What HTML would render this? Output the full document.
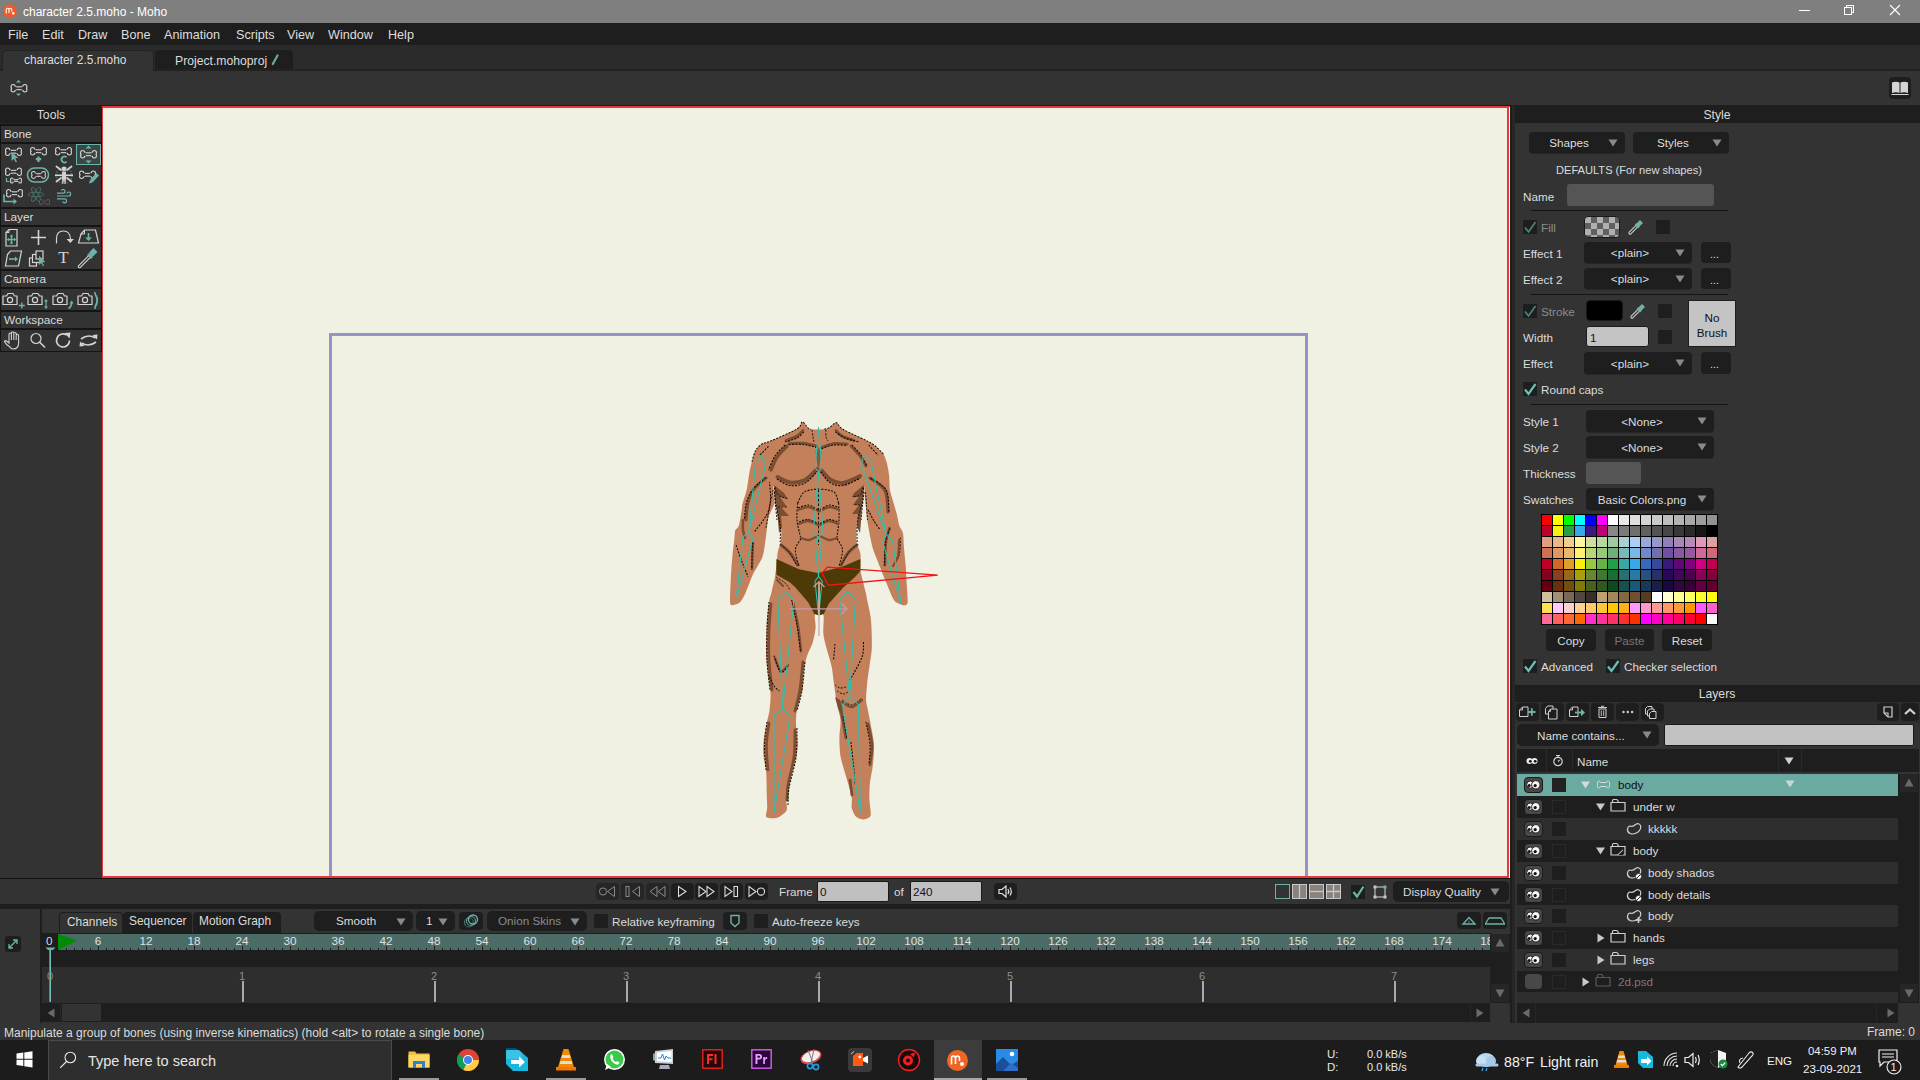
<!DOCTYPE html>
<html><head><meta charset="utf-8">
<style>
*{margin:0;padding:0;box-sizing:border-box}
html,body{width:1920px;height:1080px;overflow:hidden;background:#333;font-family:"Liberation Sans",sans-serif;font-size:12px;color:#ddd;position:relative}
.a{position:absolute}
.t{position:absolute;white-space:nowrap}
svg.a{overflow:visible}
</style></head><body>
<div class="a" style="left:0px;top:0px;width:1920px;height:23px;background:#7f7f7f;"></div>
<svg class="a" style="left:3px;top:4px;" width="14" height="14" viewBox="0 0 14 14"><circle cx="7" cy="7" r="6.8" fill="#f05a28"/><path d="M3.2 9.5V6Q3.2 4.3 4.6 4.3Q6 4.3 6 6V9M6 6Q6 4.3 7.4 4.3Q8.8 4.3 8.8 6V7.5" fill="none" stroke="#fff" stroke-width="1.1"/><circle cx="10.3" cy="9.2" r="1.2" fill="#fff"/></svg>
<div class="t" style="left:23px;top:3.1px;height:18px;line-height:18px;font-size:12px;color:#ffffff;">character 2.5.moho - Moho</div>
<div class="a" style="left:1799px;top:10px;width:11px;height:1px;background:#ffffff;"></div>
<div class="a" style="left:1846px;top:5px;width:8px;height:8px;border:1px solid #fff;"></div>
<div class="a" style="left:1844px;top:7px;width:8px;height:8px;background:#7f7f7f;border:1px solid #fff;"></div>
<svg class="a" style="left:1889px;top:4px;" width="12" height="12" viewBox="0 0 12 12"><path d="M1 1L11 11M11 1L1 11" stroke="#fff" stroke-width="1.1"/></svg>
<div class="a" style="left:0px;top:23px;width:1920px;height:22px;background:#1e1e1e;"></div>
<div class="t" style="left:8px;top:25.8px;height:18.6px;line-height:18.6px;font-size:12.6px;color:#dedede;">File</div>
<div class="t" style="left:42px;top:25.8px;height:18.6px;line-height:18.6px;font-size:12.6px;color:#dedede;">Edit</div>
<div class="t" style="left:78px;top:25.8px;height:18.6px;line-height:18.6px;font-size:12.6px;color:#dedede;">Draw</div>
<div class="t" style="left:121px;top:25.8px;height:18.6px;line-height:18.6px;font-size:12.6px;color:#dedede;">Bone</div>
<div class="t" style="left:164px;top:25.8px;height:18.6px;line-height:18.6px;font-size:12.6px;color:#dedede;">Animation</div>
<div class="t" style="left:236px;top:25.8px;height:18.6px;line-height:18.6px;font-size:12.6px;color:#dedede;">Scripts</div>
<div class="t" style="left:287px;top:25.8px;height:18.6px;line-height:18.6px;font-size:12.6px;color:#dedede;">View</div>
<div class="t" style="left:328px;top:25.8px;height:18.6px;line-height:18.6px;font-size:12.6px;color:#dedede;">Window</div>
<div class="t" style="left:388px;top:25.8px;height:18.6px;line-height:18.6px;font-size:12.6px;color:#dedede;">Help</div>
<div class="a" style="left:0px;top:45px;width:1920px;height:26px;background:#2b2b2b;"></div>
<div class="a" style="left:0px;top:69px;width:1920px;height:2px;background:#222;"></div>
<div class="a" style="left:2px;top:50px;width:152px;height:21px;background:#333;border:1px solid #222;border-bottom:none;border-radius:4px 4px 0 0"></div>
<div class="a" style="left:155px;top:50px;width:138px;height:19px;background:#1e1e1e;border-radius:4px 4px 0 0"></div>
<div class="t" style="left:24px;top:52.15px;height:17.9px;line-height:17.9px;font-size:11.9px;color:#dcdcdc;">character 2.5.moho</div>
<div class="t" style="left:175px;top:51.5px;height:18.2px;line-height:18.2px;font-size:12.2px;color:#dcdcdc;">Project.mohoproj</div>
<svg class="a" style="left:271px;top:54px;" width="8" height="12" viewBox="0 0 8 12"><path d="M6.5 1.5L1.8 10" stroke="#6aaaa0" stroke-width="2.2" stroke-linecap="round"/></svg>
<div class="a" style="left:0px;top:71px;width:1920px;height:34px;background:#333;"></div>
<div class="a" style="left:0px;top:105px;width:102px;height:773px;background:#333;"></div>
<div class="a" style="left:0px;top:105px;width:102px;height:1px;background:#1e1e1e;"></div>
<div class="a" style="left:0px;top:106px;width:102px;height:17px;background:#1e1e1e;"></div>
<div class="t" style="left:0px;top:106.0px;height:18.2px;line-height:18.2px;font-size:12.2px;color:#dcdcdc;"><div style="width:102px;text-align:center">Tools</div></div>
<div class="a" style="left:0px;top:123px;width:102px;height:229px;background:#151515;"></div>
<div class="a" style="left:0px;top:123px;width:102px;height:1px;background:#262626;"></div>
<div class="a" style="left:1px;top:126px;width:100px;height:16px;background:#333;"></div>
<div class="a" style="left:1px;top:144px;width:100px;height:63px;background:#333;"></div>
<div class="t" style="left:4px;top:126.19999999999999px;height:17.8px;line-height:17.8px;font-size:11.8px;color:#dcdcdc;">Bone</div>
<div class="a" style="left:1px;top:209px;width:100px;height:16px;background:#333;"></div>
<div class="a" style="left:1px;top:227px;width:100px;height:42px;background:#333;"></div>
<div class="t" style="left:4px;top:209.2px;height:17.8px;line-height:17.8px;font-size:11.8px;color:#dcdcdc;">Layer</div>
<div class="a" style="left:1px;top:271px;width:100px;height:16px;background:#333;"></div>
<div class="a" style="left:1px;top:289px;width:100px;height:21px;background:#333;"></div>
<div class="t" style="left:4px;top:271.20000000000005px;height:17.8px;line-height:17.8px;font-size:11.8px;color:#dcdcdc;">Camera</div>
<div class="a" style="left:1px;top:312px;width:100px;height:16px;background:#333;"></div>
<div class="a" style="left:1px;top:330px;width:100px;height:21px;background:#333;"></div>
<div class="t" style="left:4px;top:312.20000000000005px;height:17.8px;line-height:17.8px;font-size:11.8px;color:#dcdcdc;">Workspace</div>
<div class="a" style="left:102px;top:105px;width:1408px;height:773px;background:#1e1e1e;"></div>
<div class="a" style="left:102px;top:106px;width:1408px;height:772px;background:#e03c3c;"></div>
<div class="a" style="left:104px;top:108px;width:1404px;height:768px;background:#f0f0e3;"></div>
<div class="a" style="left:329px;top:333px;width:979px;height:3px;background:#9494c8;"></div>
<div class="a" style="left:329px;top:333px;width:3px;height:545px;background:#9494c8;"></div>
<div class="a" style="left:1305px;top:333px;width:3px;height:545px;background:#9494c8;"></div>
<div class="a" style="left:102px;top:876px;width:1408px;height:2px;background:#e03c3c;"></div>
<div class="a" style="left:1507px;top:106px;width:2px;height:772px;background:#e03c3c;"></div>
<div class="a" style="left:1509px;top:107px;width:1px;height:771px;background:#f4f8ec;"></div>
<div class="a" style="left:102px;top:106px;width:1px;height:772px;background:#e03c3c;"></div>
<div class="a" style="left:103px;top:108px;width:1px;height:768px;background:#f4f8ec;"></div>
<div class="a" style="left:1510px;top:105px;width:410px;height:935px;background:#1e1e1e;"></div>
<div class="a" style="left:1512px;top:105px;width:3px;height:918px;background:#262626;"></div>
<div class="a" style="left:1515px;top:105px;width:405px;height:18px;background:#1e1e1e;"></div>
<div class="t" style="left:1517.0px;top:105.5px;width:400px;text-align:center;height:18.2px;line-height:18.2px;font-size:12.2px;color:#dcdcdc;">Style</div>
<div class="a" style="left:1515px;top:123px;width:405px;height:562px;background:#333;"></div>
<div class="a" style="left:1515px;top:685px;width:405px;height:17px;background:#1e1e1e;"></div>
<div class="t" style="left:1517.0px;top:685.0px;width:400px;text-align:center;height:18.2px;line-height:18.2px;font-size:12.2px;color:#dcdcdc;">Layers</div>
<div class="a" style="left:1515px;top:702px;width:405px;height:321px;background:#333;"></div>
<div class="a" style="left:0px;top:878px;width:1510px;height:1px;background:#111;"></div>
<div class="a" style="left:0px;top:879px;width:1510px;height:25px;background:#333;"></div>
<div class="a" style="left:0px;top:904px;width:1510px;height:5px;background:#1e1e1e;"></div>
<div class="a" style="left:0px;top:909px;width:1510px;height:114px;background:#333;"></div>
<div class="a" style="left:40px;top:909px;width:2px;height:114px;background:#1e1e1e;"></div>
<div class="a" style="left:0px;top:1023px;width:1920px;height:17px;background:#333;"></div>
<div class="t" style="left:4px;top:1023.6px;height:18.0px;line-height:18.0px;font-size:12.0px;color:#dcdcdc;">Manipulate a group of bones (using inverse kinematics) (hold &lt;alt&gt; to rotate a single bone)</div>
<div class="t" style="right:5px;top:1024px;height:16px;line-height:16px;font-size:12px;color:#dcdcdc">Frame: 0</div>
<div class="a" style="left:0px;top:1040px;width:1920px;height:40px;background:#1b1b1b;"></div>
<div class="a" style="left:1529px;top:132px;width:96px;height:21px;background:#1e1e1e;border-radius:4px;box-shadow:0 1px 0 #262626"></div>
<div class="t" style="left:1369.0px;top:134.25px;width:400px;text-align:center;height:17.7px;line-height:17.7px;font-size:11.7px;color:#dcdcdc;">Shapes</div>
<svg class="a" style="left:1608px;top:138.5px;" width="10" height="8" viewBox="0 0 10 8"><path d="M0.5 0.5H9.5L5 7.5Z" fill="#8a8a8a"/></svg>
<div class="a" style="left:1633px;top:132px;width:96px;height:21px;background:#1e1e1e;border-radius:4px;box-shadow:0 1px 0 #262626"></div>
<div class="t" style="left:1473.0px;top:134.25px;width:400px;text-align:center;height:17.7px;line-height:17.7px;font-size:11.7px;color:#dcdcdc;">Styles</div>
<svg class="a" style="left:1712px;top:138.5px;" width="10" height="8" viewBox="0 0 10 8"><path d="M0.5 0.5H9.5L5 7.5Z" fill="#8a8a8a"/></svg>
<div class="t" style="left:1429.0px;top:162.04999999999998px;width:400px;text-align:center;height:17.1px;line-height:17.1px;font-size:11.1px;color:#dcdcdc;">DEFAULTS (For new shapes)</div>
<div class="t" style="left:1523px;top:187.75px;height:17.7px;line-height:17.7px;font-size:11.7px;color:#dcdcdc;">Name</div>
<div class="a" style="left:1567px;top:184px;width:147px;height:22px;background:#555;border-radius:3px"></div>
<div class="a" style="left:1531px;top:210px;width:197px;height:1px;background:#151515;"></div>
<div class="a" style="left:1523px;top:220px;width:14px;height:14px;background:#1e1e1e;"></div>
<svg class="a" style="left:1523px;top:220px;" width="14" height="14" viewBox="0 0 14 14"><path d="M2 7.5L5.5 12L12.5 2" stroke="#4d8880" stroke-width="1.6" fill="none" stroke-linejoin="miter"/></svg>
<div class="t" style="left:1541px;top:219.25px;height:17.7px;line-height:17.7px;font-size:11.7px;color:#8c8c8c;">Fill</div>
<div class="a" style="left:1584px;top:216px;width:36px;height:22px;border-radius:4px;border:1px solid #1a1a1a;background-color:#b0b0b0;background-image:linear-gradient(45deg,#606060 25%,transparent 25%,transparent 75%,#606060 75%),linear-gradient(45deg,#606060 25%,transparent 25%,transparent 75%,#606060 75%);background-size:12px 12px;background-position:0 0,6px 6px"></div>
<svg class="a" style="left:1627px;top:218px;" width="18" height="18" viewBox="0 0 18 18"><path d="M3 15L11 7" stroke="#d8d8d8" stroke-width="3.2" stroke-linecap="round"/><path d="M3 15L11 7" stroke="#333" stroke-width="1.2" stroke-linecap="round"/><path d="M9.5 5.5L12.5 8.5L16 5L13 2Z" fill="#6cb4aa"/><path d="M8.5 6L12 9.5" stroke="#6cb4aa" stroke-width="2.5"/></svg>
<div class="a" style="left:1656px;top:220px;width:14px;height:14px;background:#1e1e1e;"></div>
<div class="t" style="left:1523px;top:245.25px;height:17.7px;line-height:17.7px;font-size:11.7px;color:#dcdcdc;">Effect 1</div>
<div class="a" style="left:1584px;top:242px;width:108px;height:21px;background:#1e1e1e;border-radius:4px;box-shadow:0 1px 0 #262626"></div>
<div class="t" style="left:1430.0px;top:244.25px;width:400px;text-align:center;height:17.7px;line-height:17.7px;font-size:11.7px;color:#dcdcdc;">&lt;plain&gt;</div>
<svg class="a" style="left:1675px;top:248.5px;" width="10" height="8" viewBox="0 0 10 8"><path d="M0.5 0.5H9.5L5 7.5Z" fill="#8a8a8a"/></svg>
<div class="a" style="left:1701px;top:242px;width:30px;height:21px;background:#1e1e1e;border-radius:4px"></div>
<div class="t" style="left:1710px;top:246.1px;height:17px;line-height:17px;font-size:11px;color:#dcdcdc;">...</div>
<div class="t" style="left:1523px;top:271.25px;height:17.7px;line-height:17.7px;font-size:11.7px;color:#dcdcdc;">Effect 2</div>
<div class="a" style="left:1584px;top:268px;width:108px;height:21px;background:#1e1e1e;border-radius:4px;box-shadow:0 1px 0 #262626"></div>
<div class="t" style="left:1430.0px;top:270.25px;width:400px;text-align:center;height:17.7px;line-height:17.7px;font-size:11.7px;color:#dcdcdc;">&lt;plain&gt;</div>
<svg class="a" style="left:1675px;top:274.5px;" width="10" height="8" viewBox="0 0 10 8"><path d="M0.5 0.5H9.5L5 7.5Z" fill="#8a8a8a"/></svg>
<div class="a" style="left:1701px;top:268px;width:30px;height:21px;background:#1e1e1e;border-radius:4px"></div>
<div class="t" style="left:1710px;top:272.1px;height:17px;line-height:17px;font-size:11px;color:#dcdcdc;">...</div>
<div class="a" style="left:1531px;top:294px;width:197px;height:1px;background:#151515;"></div>
<div class="a" style="left:1523px;top:304px;width:14px;height:14px;background:#1e1e1e;"></div>
<svg class="a" style="left:1523px;top:304px;" width="14" height="14" viewBox="0 0 14 14"><path d="M2 7.5L5.5 12L12.5 2" stroke="#4d8880" stroke-width="1.6" fill="none" stroke-linejoin="miter"/></svg>
<div class="t" style="left:1541px;top:303.25px;height:17.7px;line-height:17.7px;font-size:11.7px;color:#8c8c8c;">Stroke</div>
<div class="a" style="left:1586px;top:300px;width:37px;height:21px;background:#000;border-radius:4px;border:1px solid #1a1a1a"></div>
<svg class="a" style="left:1629px;top:302px;" width="18" height="18" viewBox="0 0 18 18"><path d="M3 15L11 7" stroke="#d8d8d8" stroke-width="3.2" stroke-linecap="round"/><path d="M3 15L11 7" stroke="#333" stroke-width="1.2" stroke-linecap="round"/><path d="M9.5 5.5L12.5 8.5L16 5L13 2Z" fill="#6cb4aa"/><path d="M8.5 6L12 9.5" stroke="#6cb4aa" stroke-width="2.5"/></svg>
<div class="a" style="left:1658px;top:304px;width:14px;height:14px;background:#1e1e1e;"></div>
<div class="t" style="left:1523px;top:329.25px;height:17.7px;line-height:17.7px;font-size:11.7px;color:#dcdcdc;">Width</div>
<div class="a" style="left:1586px;top:326px;width:63px;height:21px;background:#c4c4c4;border-radius:3px;border:1px solid #1a1a1a"></div>
<div class="t" style="left:1590px;top:328.75px;height:17.7px;line-height:17.7px;font-size:11.7px;color:#201020;">1</div>
<div class="a" style="left:1658px;top:330px;width:14px;height:14px;background:#1e1e1e;"></div>
<div class="a" style="left:1688px;top:300px;width:48px;height:47px;background:#c4c4c4;border:1px solid #1e1e1e"></div>
<div class="t" style="left:1512.0px;top:309.25px;width:400px;text-align:center;height:17.7px;line-height:17.7px;font-size:11.7px;color:#101010;">No</div>
<div class="t" style="left:1512.0px;top:323.75px;width:400px;text-align:center;height:17.7px;line-height:17.7px;font-size:11.7px;color:#101010;">Brush</div>
<div class="t" style="left:1523px;top:355.25px;height:17.7px;line-height:17.7px;font-size:11.7px;color:#dcdcdc;">Effect</div>
<div class="a" style="left:1584px;top:352px;width:108px;height:22px;background:#1e1e1e;border-radius:4px;box-shadow:0 1px 0 #262626"></div>
<div class="t" style="left:1430.0px;top:354.75px;width:400px;text-align:center;height:17.7px;line-height:17.7px;font-size:11.7px;color:#dcdcdc;">&lt;plain&gt;</div>
<svg class="a" style="left:1675px;top:359.0px;" width="10" height="8" viewBox="0 0 10 8"><path d="M0.5 0.5H9.5L5 7.5Z" fill="#8a8a8a"/></svg>
<div class="a" style="left:1701px;top:352px;width:30px;height:22px;background:#1e1e1e;border-radius:4px"></div>
<div class="t" style="left:1710px;top:356.1px;height:17px;line-height:17px;font-size:11px;color:#dcdcdc;">...</div>
<div class="a" style="left:1523px;top:382px;width:14px;height:14px;background:#1e1e1e;"></div>
<svg class="a" style="left:1523px;top:382px;" width="14" height="14" viewBox="0 0 14 14"><path d="M2 7.5L5.5 12L12.5 2" stroke="#6cc0b4" stroke-width="2.2" fill="none" stroke-linejoin="miter"/></svg>
<div class="t" style="left:1541px;top:381.25px;height:17.7px;line-height:17.7px;font-size:11.7px;color:#dcdcdc;">Round caps</div>
<div class="a" style="left:1531px;top:404px;width:197px;height:1px;background:#151515;"></div>
<div class="t" style="left:1523px;top:412.75px;height:17.7px;line-height:17.7px;font-size:11.7px;color:#dcdcdc;">Style 1</div>
<div class="a" style="left:1586px;top:410px;width:128px;height:22px;background:#1e1e1e;border-radius:4px;box-shadow:0 1px 0 #262626"></div>
<div class="t" style="left:1442.0px;top:412.75px;width:400px;text-align:center;height:17.7px;line-height:17.7px;font-size:11.7px;color:#dcdcdc;">&lt;None&gt;</div>
<svg class="a" style="left:1697px;top:417.0px;" width="10" height="8" viewBox="0 0 10 8"><path d="M0.5 0.5H9.5L5 7.5Z" fill="#8a8a8a"/></svg>
<div class="t" style="left:1523px;top:439.25px;height:17.7px;line-height:17.7px;font-size:11.7px;color:#dcdcdc;">Style 2</div>
<div class="a" style="left:1586px;top:436px;width:128px;height:22px;background:#1e1e1e;border-radius:4px;box-shadow:0 1px 0 #262626"></div>
<div class="t" style="left:1442.0px;top:438.75px;width:400px;text-align:center;height:17.7px;line-height:17.7px;font-size:11.7px;color:#dcdcdc;">&lt;None&gt;</div>
<svg class="a" style="left:1697px;top:443.0px;" width="10" height="8" viewBox="0 0 10 8"><path d="M0.5 0.5H9.5L5 7.5Z" fill="#8a8a8a"/></svg>
<div class="t" style="left:1523px;top:465.25px;height:17.7px;line-height:17.7px;font-size:11.7px;color:#dcdcdc;">Thickness</div>
<div class="a" style="left:1586px;top:462px;width:55px;height:22px;background:#555;border-radius:3px"></div>
<div class="t" style="left:1523px;top:491.25px;height:17.7px;line-height:17.7px;font-size:11.7px;color:#dcdcdc;">Swatches</div>
<div class="a" style="left:1586px;top:488px;width:128px;height:22px;background:#1e1e1e;border-radius:4px;box-shadow:0 1px 0 #262626"></div>
<div class="t" style="left:1442.0px;top:490.75px;width:400px;text-align:center;height:17.7px;line-height:17.7px;font-size:11.7px;color:#dcdcdc;">Basic Colors.png</div>
<svg class="a" style="left:1697px;top:495.0px;" width="10" height="8" viewBox="0 0 10 8"><path d="M0.5 0.5H9.5L5 7.5Z" fill="#8a8a8a"/></svg>
<div class="a" style="left:1541px;top:514px;width:177px;height:111px;background:#000;"></div>
<svg class="a" style="left:1541px;top:514px;" width="177" height="111" viewBox="0 0 177 111"><rect x="1" y="1" width="10" height="10" fill="#ff0000"/><rect x="12" y="1" width="10" height="10" fill="#ffff00"/><rect x="23" y="1" width="10" height="10" fill="#00ff00"/><rect x="34" y="1" width="10" height="10" fill="#00ffff"/><rect x="45" y="1" width="10" height="10" fill="#0000ff"/><rect x="56" y="1" width="10" height="10" fill="#ff00ff"/><rect x="67" y="1" width="10" height="10" fill="#ffffff"/><rect x="78" y="1" width="10" height="10" fill="#e9e9e9"/><rect x="89" y="1" width="10" height="10" fill="#dfdfdf"/><rect x="100" y="1" width="10" height="10" fill="#d4d4d4"/><rect x="111" y="1" width="10" height="10" fill="#c9c9c9"/><rect x="122" y="1" width="10" height="10" fill="#bebebe"/><rect x="133" y="1" width="10" height="10" fill="#b3b3b3"/><rect x="144" y="1" width="10" height="10" fill="#a8a8a8"/><rect x="155" y="1" width="10" height="10" fill="#9d9d9d"/><rect x="166" y="1" width="10" height="10" fill="#929292"/><rect x="1" y="12" width="10" height="10" fill="#c00028"/><rect x="12" y="12" width="10" height="10" fill="#f8f010"/><rect x="23" y="12" width="10" height="10" fill="#28a048"/><rect x="34" y="12" width="10" height="10" fill="#38a8e8"/><rect x="45" y="12" width="10" height="10" fill="#3c1880"/><rect x="56" y="12" width="10" height="10" fill="#c00078"/><rect x="67" y="12" width="10" height="10" fill="#888888"/><rect x="78" y="12" width="10" height="10" fill="#7a7a7a"/><rect x="89" y="12" width="10" height="10" fill="#6e6e6e"/><rect x="100" y="12" width="10" height="10" fill="#606060"/><rect x="111" y="12" width="10" height="10" fill="#535353"/><rect x="122" y="12" width="10" height="10" fill="#464646"/><rect x="133" y="12" width="10" height="10" fill="#383838"/><rect x="144" y="12" width="10" height="10" fill="#2a2a2a"/><rect x="155" y="12" width="10" height="10" fill="#161616"/><rect x="166" y="12" width="10" height="10" fill="#000000"/><rect x="1" y="23" width="10" height="10" fill="#e0a080"/><rect x="12" y="23" width="10" height="10" fill="#e8b888"/><rect x="23" y="23" width="10" height="10" fill="#f0d090"/><rect x="34" y="23" width="10" height="10" fill="#fff8a0"/><rect x="45" y="23" width="10" height="10" fill="#d0e0a0"/><rect x="56" y="23" width="10" height="10" fill="#b8d8a0"/><rect x="67" y="23" width="10" height="10" fill="#a0c8a0"/><rect x="78" y="23" width="10" height="10" fill="#a8d0d0"/><rect x="89" y="23" width="10" height="10" fill="#a8d0f8"/><rect x="100" y="23" width="10" height="10" fill="#98a8d8"/><rect x="111" y="23" width="10" height="10" fill="#9898c8"/><rect x="122" y="23" width="10" height="10" fill="#9080b8"/><rect x="133" y="23" width="10" height="10" fill="#a888b8"/><rect x="144" y="23" width="10" height="10" fill="#b888b8"/><rect x="155" y="23" width="10" height="10" fill="#e098b8"/><rect x="166" y="23" width="10" height="10" fill="#e0a0a0"/><rect x="1" y="34" width="10" height="10" fill="#d07050"/><rect x="12" y="34" width="10" height="10" fill="#e09860"/><rect x="23" y="34" width="10" height="10" fill="#e8b868"/><rect x="34" y="34" width="10" height="10" fill="#fff070"/><rect x="45" y="34" width="10" height="10" fill="#b8d878"/><rect x="56" y="34" width="10" height="10" fill="#98c878"/><rect x="67" y="34" width="10" height="10" fill="#70b078"/><rect x="78" y="34" width="10" height="10" fill="#78b8b8"/><rect x="89" y="34" width="10" height="10" fill="#78b8e8"/><rect x="100" y="34" width="10" height="10" fill="#7088c8"/><rect x="111" y="34" width="10" height="10" fill="#7070b0"/><rect x="122" y="34" width="10" height="10" fill="#7050a0"/><rect x="133" y="34" width="10" height="10" fill="#8858a0"/><rect x="144" y="34" width="10" height="10" fill="#9858a0"/><rect x="155" y="34" width="10" height="10" fill="#d06898"/><rect x="166" y="34" width="10" height="10" fill="#d06878"/><rect x="1" y="45" width="10" height="10" fill="#c00028"/><rect x="12" y="45" width="10" height="10" fill="#d06828"/><rect x="23" y="45" width="10" height="10" fill="#e0a028"/><rect x="34" y="45" width="10" height="10" fill="#f8f008"/><rect x="45" y="45" width="10" height="10" fill="#98c840"/><rect x="56" y="45" width="10" height="10" fill="#68b048"/><rect x="67" y="45" width="10" height="10" fill="#20a048"/><rect x="78" y="45" width="10" height="10" fill="#38a8a0"/><rect x="89" y="45" width="10" height="10" fill="#38a8e8"/><rect x="100" y="45" width="10" height="10" fill="#3868b8"/><rect x="111" y="45" width="10" height="10" fill="#384898"/><rect x="122" y="45" width="10" height="10" fill="#381878"/><rect x="133" y="45" width="10" height="10" fill="#600878"/><rect x="144" y="45" width="10" height="10" fill="#800080"/><rect x="155" y="45" width="10" height="10" fill="#d00080"/><rect x="166" y="45" width="10" height="10" fill="#c00050"/><rect x="1" y="56" width="10" height="10" fill="#880020"/><rect x="12" y="56" width="10" height="10" fill="#884020"/><rect x="23" y="56" width="10" height="10" fill="#986818"/><rect x="34" y="56" width="10" height="10" fill="#a8a008"/><rect x="45" y="56" width="10" height="10" fill="#688830"/><rect x="56" y="56" width="10" height="10" fill="#407830"/><rect x="67" y="56" width="10" height="10" fill="#187030"/><rect x="78" y="56" width="10" height="10" fill="#287070"/><rect x="89" y="56" width="10" height="10" fill="#2878a8"/><rect x="100" y="56" width="10" height="10" fill="#285080"/><rect x="111" y="56" width="10" height="10" fill="#283068"/><rect x="122" y="56" width="10" height="10" fill="#280858"/><rect x="133" y="56" width="10" height="10" fill="#400858"/><rect x="144" y="56" width="10" height="10" fill="#500050"/><rect x="155" y="56" width="10" height="10" fill="#880058"/><rect x="166" y="56" width="10" height="10" fill="#880038"/><rect x="1" y="67" width="10" height="10" fill="#600010"/><rect x="12" y="67" width="10" height="10" fill="#683010"/><rect x="23" y="67" width="10" height="10" fill="#705010"/><rect x="34" y="67" width="10" height="10" fill="#807808"/><rect x="45" y="67" width="10" height="10" fill="#486020"/><rect x="56" y="67" width="10" height="10" fill="#305820"/><rect x="67" y="67" width="10" height="10" fill="#104820"/><rect x="78" y="67" width="10" height="10" fill="#185050"/><rect x="89" y="67" width="10" height="10" fill="#185878"/><rect x="100" y="67" width="10" height="10" fill="#183858"/><rect x="111" y="67" width="10" height="10" fill="#182048"/><rect x="122" y="67" width="10" height="10" fill="#180840"/><rect x="133" y="67" width="10" height="10" fill="#300840"/><rect x="144" y="67" width="10" height="10" fill="#380038"/><rect x="155" y="67" width="10" height="10" fill="#600040"/><rect x="166" y="67" width="10" height="10" fill="#600030"/><rect x="1" y="78" width="10" height="10" fill="#d0c0a0"/><rect x="12" y="78" width="10" height="10" fill="#a09078"/><rect x="23" y="78" width="10" height="10" fill="#786858"/><rect x="34" y="78" width="10" height="10" fill="#504840"/><rect x="45" y="78" width="10" height="10" fill="#383028"/><rect x="56" y="78" width="10" height="10" fill="#c0a070"/><rect x="67" y="78" width="10" height="10" fill="#a08858"/><rect x="78" y="78" width="10" height="10" fill="#806840"/><rect x="89" y="78" width="10" height="10" fill="#705030"/><rect x="100" y="78" width="10" height="10" fill="#583c20"/><rect x="111" y="78" width="10" height="10" fill="#ffffff"/><rect x="122" y="78" width="10" height="10" fill="#ffffd0"/><rect x="133" y="78" width="10" height="10" fill="#ffff90"/><rect x="144" y="78" width="10" height="10" fill="#ffff60"/><rect x="155" y="78" width="10" height="10" fill="#ffff30"/><rect x="166" y="78" width="10" height="10" fill="#ffff00"/><rect x="1" y="89" width="10" height="10" fill="#ffe050"/><rect x="12" y="89" width="10" height="10" fill="#ffc8ff"/><rect x="23" y="89" width="10" height="10" fill="#ffd0d0"/><rect x="34" y="89" width="10" height="10" fill="#ffd098"/><rect x="45" y="89" width="10" height="10" fill="#ffc868"/><rect x="56" y="89" width="10" height="10" fill="#ffc838"/><rect x="67" y="89" width="10" height="10" fill="#ffc800"/><rect x="78" y="89" width="10" height="10" fill="#ffb018"/><rect x="89" y="89" width="10" height="10" fill="#ff98ff"/><rect x="100" y="89" width="10" height="10" fill="#ff98c8"/><rect x="111" y="89" width="10" height="10" fill="#ff9898"/><rect x="122" y="89" width="10" height="10" fill="#ff9868"/><rect x="133" y="89" width="10" height="10" fill="#ff9838"/><rect x="144" y="89" width="10" height="10" fill="#ff9800"/><rect x="155" y="89" width="10" height="10" fill="#ff58ff"/><rect x="166" y="89" width="10" height="10" fill="#ff60c8"/><rect x="1" y="100" width="10" height="10" fill="#ff6898"/><rect x="12" y="100" width="10" height="10" fill="#ff6060"/><rect x="23" y="100" width="10" height="10" fill="#ff6830"/><rect x="34" y="100" width="10" height="10" fill="#ff6800"/><rect x="45" y="100" width="10" height="10" fill="#ff30c8"/><rect x="56" y="100" width="10" height="10" fill="#ff3098"/><rect x="67" y="100" width="10" height="10" fill="#ff3068"/><rect x="78" y="100" width="10" height="10" fill="#ff3030"/><rect x="89" y="100" width="10" height="10" fill="#ff3000"/><rect x="100" y="100" width="10" height="10" fill="#ff00ff"/><rect x="111" y="100" width="10" height="10" fill="#ff00c8"/><rect x="122" y="100" width="10" height="10" fill="#ff0098"/><rect x="133" y="100" width="10" height="10" fill="#ff0068"/><rect x="144" y="100" width="10" height="10" fill="#ff0030"/><rect x="155" y="100" width="10" height="10" fill="#ff0000"/><rect x="166" y="100" width="10" height="10" fill="#f8f8f8"/></svg>
<div class="a" style="left:1546px;top:629px;width:50px;height:22px;background:#1e1e1e;border-radius:4px"></div>
<div class="t" style="left:1371.0px;top:631.75px;width:400px;text-align:center;height:17.7px;line-height:17.7px;font-size:11.7px;color:#dcdcdc;">Copy</div>
<div class="a" style="left:1605px;top:629px;width:49px;height:22px;background:#1e1e1e;border-radius:4px"></div>
<div class="t" style="left:1429.5px;top:631.75px;width:400px;text-align:center;height:17.7px;line-height:17.7px;font-size:11.7px;color:#777;">Paste</div>
<div class="a" style="left:1662px;top:629px;width:50px;height:22px;background:#1e1e1e;border-radius:4px"></div>
<div class="t" style="left:1487.0px;top:631.75px;width:400px;text-align:center;height:17.7px;line-height:17.7px;font-size:11.7px;color:#dcdcdc;">Reset</div>
<div class="a" style="left:1523px;top:659px;width:14px;height:14px;background:#1e1e1e;"></div>
<svg class="a" style="left:1523px;top:659px;" width="14" height="14" viewBox="0 0 14 14"><path d="M2 7.5L5.5 12L12.5 2" stroke="#6cc0b4" stroke-width="2.2" fill="none" stroke-linejoin="miter"/></svg>
<div class="t" style="left:1541px;top:658.25px;height:17.7px;line-height:17.7px;font-size:11.7px;color:#dcdcdc;">Advanced</div>
<div class="a" style="left:1606px;top:659px;width:14px;height:14px;background:#1e1e1e;"></div>
<svg class="a" style="left:1606px;top:659px;" width="14" height="14" viewBox="0 0 14 14"><path d="M2 7.5L5.5 12L12.5 2" stroke="#6cc0b4" stroke-width="2.2" fill="none" stroke-linejoin="miter"/></svg>
<div class="t" style="left:1624px;top:658.25px;height:17.7px;line-height:17.7px;font-size:11.7px;color:#dcdcdc;">Checker selection</div>
<div class="a" style="left:1515px;top:702px;width:405px;height:21px;background:#2e2e2e;"></div>
<div class="a" style="left:1516px;top:703px;width:23px;height:18px;background:#1e1e1e;border-radius:4px"></div>
<div class="a" style="left:1541px;top:703px;width:23px;height:18px;background:#1e1e1e;border-radius:4px"></div>
<div class="a" style="left:1566px;top:703px;width:23px;height:18px;background:#1e1e1e;border-radius:4px"></div>
<div class="a" style="left:1591px;top:703px;width:23px;height:18px;background:#1e1e1e;border-radius:4px"></div>
<div class="a" style="left:1616px;top:703px;width:23px;height:18px;background:#1e1e1e;border-radius:4px"></div>
<div class="a" style="left:1641px;top:703px;width:23px;height:18px;background:#1e1e1e;border-radius:4px"></div>
<svg class="a" style="left:1516px;top:703px;" width="24" height="18" viewBox="0 0 24 18"><path d="M3.5 7L6.5 4H12V13.5H3.5Z" fill="none" stroke="#d0d0d0" stroke-width="1"/><path d="M3.5 7H6.5V4" fill="none" stroke="#d0d0d0" stroke-width="0.9"/><path d="M12 9H19.5M15.8 5.2V12.8" stroke="#6cb4aa" stroke-width="1.8"/></svg>
<svg class="a" style="left:1541px;top:703px;" width="24" height="18" viewBox="0 0 24 18"><path d="M4.5 5.5L6.5 3H12V11H4.5Z" fill="none" stroke="#d0d0d0" stroke-width="1"/><path d="M7.5 8.5L9.5 6H16V16H7.5Z" fill="#1e1e1e" stroke="#d0d0d0" stroke-width="1"/><path d="M7.5 8.5H9.5V6" fill="none" stroke="#d0d0d0" stroke-width="0.9"/></svg>
<svg class="a" style="left:1566px;top:703px;" width="24" height="18" viewBox="0 0 24 18"><path d="M3.5 7L6.5 4H12V13.5H3.5Z" fill="none" stroke="#d0d0d0" stroke-width="1"/><path d="M3.5 7H6.5V4" fill="none" stroke="#d0d0d0" stroke-width="0.9"/><path d="M9 9.5H16" stroke="#6cb4aa" stroke-width="1.8"/><path d="M15 5.8L19 9.5L15 13.2Z" fill="#6cb4aa"/></svg>
<svg class="a" style="left:1591px;top:703px;" width="24" height="18" viewBox="0 0 24 18"><path d="M7 4.5H16M10 3.2H13" stroke="#d0d0d0" stroke-width="1.1"/><path d="M8 6H15V14.5H8Z" fill="none" stroke="#d0d0d0" stroke-width="1"/><path d="M10.3 7.5V13M12.7 7.5V13" stroke="#d0d0d0" stroke-width="0.9"/></svg>
<svg class="a" style="left:1616px;top:703px;" width="24" height="18" viewBox="0 0 24 18"><circle cx="7.5" cy="9" r="1.2" fill="#d0d0d0"/><circle cx="11.8" cy="9" r="1.2" fill="#d0d0d0"/><circle cx="16.1" cy="9" r="1.2" fill="#d0d0d0"/></svg>
<svg class="a" style="left:1641px;top:703px;" width="24" height="18" viewBox="0 0 24 18"><path d="M4.5 5.5L6.5 3.5H11V11H4.5Z" fill="none" stroke="#d0d0d0" stroke-width="1"/><path d="M6.5 8L8.5 6H13V13H6.5Z" fill="#1e1e1e" stroke="#d0d0d0" stroke-width="1"/><path d="M8.5 10.5L10.5 8.5H15V15.5H8.5Z" fill="#1e1e1e" stroke="#d0d0d0" stroke-width="1"/></svg>
<div class="a" style="left:1877px;top:703px;width:22px;height:18px;background:#1e1e1e;border-radius:4px"></div>
<div class="a" style="left:1901px;top:703px;width:18px;height:18px;background:#1e1e1e;border-radius:4px"></div>
<svg class="a" style="left:1877px;top:703px;" width="22" height="18" viewBox="0 0 22 18"><path d="M7 4H15V14H11L7 10Z" fill="none" stroke="#d0d0d0" stroke-width="1.2"/><path d="M7 10H11V14" fill="none" stroke="#d0d0d0" stroke-width="1.1"/></svg>
<svg class="a" style="left:1901px;top:703px;" width="18" height="18" viewBox="0 0 18 18"><path d="M4 11L9 6.5L14 11" fill="none" stroke="#d0d0d0" stroke-width="2.3"/></svg>
<div class="a" style="left:1517px;top:724px;width:142px;height:22px;background:#1e1e1e;border-radius:5px"></div>
<div class="t" style="left:1537px;top:727.25px;height:17.7px;line-height:17.7px;font-size:11.7px;color:#dcdcdc;">Name contains...</div>
<svg class="a" style="left:1642px;top:731px;" width="10" height="8" viewBox="0 0 10 8"><path d="M0.5 0.5H9.5L5 7.5Z" fill="#8a8a8a"/></svg>
<div class="a" style="left:1664px;top:724px;width:250px;height:22px;background:#c2c2c2;border:1px solid #1a1a1a;border-radius:2px"></div>
<div class="a" style="left:1517px;top:749px;width:402px;height:23px;background:#1e1e1e;"></div>
<div class="a" style="left:1546px;top:749px;width:1px;height:23px;background:#2a2a2a;"></div>
<div class="a" style="left:1572px;top:749px;width:1px;height:23px;background:#2a2a2a;"></div>
<div class="a" style="left:1778px;top:749px;width:1px;height:23px;background:#2a2a2a;"></div>
<div class="a" style="left:1801px;top:749px;width:1px;height:23px;background:#2a2a2a;"></div>
<svg class="a" style="left:1525px;top:755px;" width="14" height="12" viewBox="0 0 14 12"><circle cx="4.5" cy="6" r="3" fill="#eee"/><circle cx="9.5" cy="6" r="3" fill="#eee"/><circle cx="5.3" cy="6.3" r="1.4" fill="#111"/><circle cx="10.2" cy="6.3" r="1.4" fill="#111"/></svg>
<svg class="a" style="left:1551px;top:752px;" width="14" height="16" viewBox="0 0 14 16"><circle cx="7" cy="9.5" r="4.2" fill="none" stroke="#cfcfcf" stroke-width="1.2"/><path d="M5 3.5H9M7 4V6M7 9.5L8.5 8" stroke="#cfcfcf" stroke-width="1.2"/></svg>
<div class="t" style="left:1577px;top:752.75px;height:17.7px;line-height:17.7px;font-size:11.7px;color:#dcdcdc;">Name</div>
<svg class="a" style="left:1784px;top:757px;" width="10" height="8" viewBox="0 0 10 8"><path d="M0.5 0.5H9.5L5 7.5Z" fill="#d0d0d0"/></svg>
<div class="a" style="left:1517px;top:774px;width:383px;height:229px;background:#2e2e2e;"></div>
<div class="a" style="left:1517px;top:774px;width:381px;height:22px;background:#6aaaa0;"></div>
<div class="a" style="left:1524px;top:777px;width:19px;height:16px;background:#484848;border-radius:4px;border:1px solid #1a1a1a"></div>
<svg class="a" style="left:1524px;top:777px;" width="19" height="16" viewBox="0 0 19 16"><circle cx="6.3" cy="7.6" r="3.6" fill="#f6f6f6" stroke="#111" stroke-width="0.9"/><circle cx="11.8" cy="7.8" r="4.2" fill="#f6f6f6" stroke="#111" stroke-width="0.9"/><circle cx="5.2" cy="8.4" r="1.5" fill="#111"/><circle cx="11.2" cy="8.6" r="1.6" fill="#111"/></svg>
<div class="a" style="left:1552px;top:778px;width:14px;height:14px;background:#222;"></div>
<svg class="a" style="left:1581px;top:781px;" width="9" height="8" viewBox="0 0 9 8"><path d="M0 0.5H9L4.5 7.5Z" fill="#d8d8d8"/></svg>
<svg class="a" style="left:1596px;top:780px;" width="15" height="9" viewBox="0 0 15 9"><path d="M2.5 1.2Q4 0.8 4.5 2.5H10.5Q11 0.8 12.5 1.2Q14.3 1.6 13.5 4.5Q14.3 7.4 12.5 7.8Q11 8.2 10.5 6.5H4.5Q4 8.2 2.5 7.8Q0.7 7.4 1.5 4.5Q0.7 1.6 2.5 1.2Z" fill="none" stroke="#d8e4e2" stroke-width="0.9"/></svg>
<div class="t" style="left:1618px;top:775.75px;height:17.7px;line-height:17.7px;font-size:11.7px;color:#101010;">body</div>
<div class="a" style="left:1517px;top:796px;width:381px;height:22px;background:#1e1e1e;"></div>
<div class="a" style="left:1524px;top:799px;width:19px;height:16px;background:#484848;border-radius:4px;border:1px solid #1a1a1a"></div>
<svg class="a" style="left:1524px;top:799px;" width="19" height="16" viewBox="0 0 19 16"><circle cx="6.3" cy="7.6" r="3.6" fill="#f6f6f6" stroke="#111" stroke-width="0.9"/><circle cx="11.8" cy="7.8" r="4.2" fill="#f6f6f6" stroke="#111" stroke-width="0.9"/><circle cx="5.2" cy="8.4" r="1.5" fill="#111"/><circle cx="11.2" cy="8.6" r="1.6" fill="#111"/></svg>
<div class="a" style="left:1552px;top:800px;width:14px;height:14px;background:#2a2a2a;"></div>
<div class="a" style="left:1553px;top:801px;width:12px;height:12px;background:#1e1e1e;"></div>
<svg class="a" style="left:1596px;top:803px;" width="9" height="8" viewBox="0 0 9 8"><path d="M0 0.5H9L4.5 7.5Z" fill="#c8c8c8"/></svg>
<svg class="a" style="left:1610px;top:797.5px;" width="16" height="14" viewBox="0 0 16 14"><path d="M1 4.5H15V13H1Z" fill="none" stroke="#d0d0d0" stroke-width="1.2"/><path d="M2.5 4.5V2.5Q2.5 1.5 3.5 1.5H6.5Q7.5 1.5 8 3L8.5 4.5" fill="none" stroke="#d0d0d0" stroke-width="1.1"/></svg>
<div class="t" style="left:1633px;top:797.75px;height:17.7px;line-height:17.7px;font-size:11.7px;color:#dcdcdc;">under w</div>
<div class="a" style="left:1517px;top:818px;width:381px;height:22px;background:#2e2e2e;"></div>
<div class="a" style="left:1524px;top:821px;width:19px;height:16px;background:#484848;border-radius:4px;border:1px solid #1a1a1a"></div>
<svg class="a" style="left:1524px;top:821px;" width="19" height="16" viewBox="0 0 19 16"><circle cx="6.3" cy="7.6" r="3.6" fill="#f6f6f6" stroke="#111" stroke-width="0.9"/><circle cx="11.8" cy="7.8" r="4.2" fill="#f6f6f6" stroke="#111" stroke-width="0.9"/><circle cx="5.2" cy="8.4" r="1.5" fill="#111"/><circle cx="11.2" cy="8.6" r="1.6" fill="#111"/></svg>
<div class="a" style="left:1552px;top:822px;width:14px;height:14px;background:#1e1e1e;"></div>
<svg class="a" style="left:1626px;top:821px;" width="17" height="17" viewBox="0 0 17 17"><path d="M4 5Q7 6 9.5 3.5Q13 1.5 14.5 4.5Q15.5 8 12 11Q8 14 4 12.5Q1 11 1.5 8Q2 5 4 5Z" fill="none" stroke="#d0d0d0" stroke-width="1.2"/></svg>
<div class="t" style="left:1648px;top:819.75px;height:17.7px;line-height:17.7px;font-size:11.7px;color:#dcdcdc;">kkkkk</div>
<div class="a" style="left:1517px;top:840px;width:381px;height:22px;background:#1e1e1e;"></div>
<div class="a" style="left:1524px;top:843px;width:19px;height:16px;background:#484848;border-radius:4px;border:1px solid #1a1a1a"></div>
<svg class="a" style="left:1524px;top:843px;" width="19" height="16" viewBox="0 0 19 16"><circle cx="6.3" cy="7.6" r="3.6" fill="#f6f6f6" stroke="#111" stroke-width="0.9"/><circle cx="11.8" cy="7.8" r="4.2" fill="#f6f6f6" stroke="#111" stroke-width="0.9"/><circle cx="5.2" cy="8.4" r="1.5" fill="#111"/><circle cx="11.2" cy="8.6" r="1.6" fill="#111"/></svg>
<div class="a" style="left:1552px;top:844px;width:14px;height:14px;background:#2a2a2a;"></div>
<div class="a" style="left:1553px;top:845px;width:12px;height:12px;background:#1e1e1e;"></div>
<svg class="a" style="left:1596px;top:847px;" width="9" height="8" viewBox="0 0 9 8"><path d="M0 0.5H9L4.5 7.5Z" fill="#c8c8c8"/></svg>
<svg class="a" style="left:1610px;top:841.5px;" width="16" height="14" viewBox="0 0 16 14"><path d="M1 4.5H15V13H1Z" fill="none" stroke="#d0d0d0" stroke-width="1.2"/><path d="M2.5 4.5V2.5Q2.5 1.5 3.5 1.5H6.5Q7.5 1.5 8 3L8.5 4.5" fill="none" stroke="#d0d0d0" stroke-width="1.1"/><path d="M7 13L13 7.5V13Z" fill="#eee"/><path d="M8 13L13 8.5V13Z" fill="#221a14"/></svg>
<div class="t" style="left:1633px;top:841.75px;height:17.7px;line-height:17.7px;font-size:11.7px;color:#dcdcdc;">body</div>
<div class="a" style="left:1517px;top:862px;width:381px;height:22px;background:#2e2e2e;"></div>
<div class="a" style="left:1524px;top:865px;width:19px;height:16px;background:#484848;border-radius:4px;border:1px solid #1a1a1a"></div>
<svg class="a" style="left:1524px;top:865px;" width="19" height="16" viewBox="0 0 19 16"><circle cx="6.3" cy="7.6" r="3.6" fill="#f6f6f6" stroke="#111" stroke-width="0.9"/><circle cx="11.8" cy="7.8" r="4.2" fill="#f6f6f6" stroke="#111" stroke-width="0.9"/><circle cx="5.2" cy="8.4" r="1.5" fill="#111"/><circle cx="11.2" cy="8.6" r="1.6" fill="#111"/></svg>
<div class="a" style="left:1552px;top:866px;width:14px;height:14px;background:#1e1e1e;"></div>
<svg class="a" style="left:1626px;top:865px;" width="17" height="17" viewBox="0 0 17 17"><path d="M4 5Q7 6 9.5 3.5Q13 1.5 14.5 4.5Q15.5 8 12 11Q8 14 4 12.5Q1 11 1.5 8Q2 5 4 5Z" fill="none" stroke="#d0d0d0" stroke-width="1.2"/><circle cx="12.5" cy="11.5" r="3" fill="#fff" stroke="#222" stroke-width="0.8"/><path d="M10.5 13.5L14.5 9.5" stroke="#222" stroke-width="1"/></svg>
<div class="t" style="left:1648px;top:863.75px;height:17.7px;line-height:17.7px;font-size:11.7px;color:#dcdcdc;">body shados</div>
<div class="a" style="left:1517px;top:884px;width:381px;height:22px;background:#1e1e1e;"></div>
<div class="a" style="left:1524px;top:887px;width:19px;height:16px;background:#484848;border-radius:4px;border:1px solid #1a1a1a"></div>
<svg class="a" style="left:1524px;top:887px;" width="19" height="16" viewBox="0 0 19 16"><circle cx="6.3" cy="7.6" r="3.6" fill="#f6f6f6" stroke="#111" stroke-width="0.9"/><circle cx="11.8" cy="7.8" r="4.2" fill="#f6f6f6" stroke="#111" stroke-width="0.9"/><circle cx="5.2" cy="8.4" r="1.5" fill="#111"/><circle cx="11.2" cy="8.6" r="1.6" fill="#111"/></svg>
<div class="a" style="left:1552px;top:888px;width:14px;height:14px;background:#2a2a2a;"></div>
<div class="a" style="left:1553px;top:889px;width:12px;height:12px;background:#1e1e1e;"></div>
<svg class="a" style="left:1626px;top:887px;" width="17" height="17" viewBox="0 0 17 17"><path d="M4 5Q7 6 9.5 3.5Q13 1.5 14.5 4.5Q15.5 8 12 11Q8 14 4 12.5Q1 11 1.5 8Q2 5 4 5Z" fill="none" stroke="#d0d0d0" stroke-width="1.2"/><circle cx="12.5" cy="11.5" r="3" fill="#fff" stroke="#222" stroke-width="0.8"/><path d="M10.5 13.5L14.5 9.5" stroke="#222" stroke-width="1"/></svg>
<div class="t" style="left:1648px;top:885.75px;height:17.7px;line-height:17.7px;font-size:11.7px;color:#dcdcdc;">body details</div>
<div class="a" style="left:1517px;top:905px;width:381px;height:22px;background:#2e2e2e;"></div>
<div class="a" style="left:1524px;top:908px;width:19px;height:16px;background:#484848;border-radius:4px;border:1px solid #1a1a1a"></div>
<svg class="a" style="left:1524px;top:908px;" width="19" height="16" viewBox="0 0 19 16"><circle cx="6.3" cy="7.6" r="3.6" fill="#f6f6f6" stroke="#111" stroke-width="0.9"/><circle cx="11.8" cy="7.8" r="4.2" fill="#f6f6f6" stroke="#111" stroke-width="0.9"/><circle cx="5.2" cy="8.4" r="1.5" fill="#111"/><circle cx="11.2" cy="8.6" r="1.6" fill="#111"/></svg>
<div class="a" style="left:1552px;top:909px;width:14px;height:14px;background:#1e1e1e;"></div>
<svg class="a" style="left:1626px;top:908px;" width="17" height="17" viewBox="0 0 17 17"><path d="M4 5Q7 6 9.5 3.5Q13 1.5 14.5 4.5Q15.5 8 12 11Q8 14 4 12.5Q1 11 1.5 8Q2 5 4 5Z" fill="none" stroke="#d0d0d0" stroke-width="1.2"/><path d="M9.5 12H15.5M12.5 9V15" stroke="#d0d0d0" stroke-width="1.6"/></svg>
<div class="t" style="left:1648px;top:906.75px;height:17.7px;line-height:17.7px;font-size:11.7px;color:#dcdcdc;">body</div>
<div class="a" style="left:1517px;top:927px;width:381px;height:22px;background:#1e1e1e;"></div>
<div class="a" style="left:1524px;top:930px;width:19px;height:16px;background:#484848;border-radius:4px;border:1px solid #1a1a1a"></div>
<svg class="a" style="left:1524px;top:930px;" width="19" height="16" viewBox="0 0 19 16"><circle cx="6.3" cy="7.6" r="3.6" fill="#f6f6f6" stroke="#111" stroke-width="0.9"/><circle cx="11.8" cy="7.8" r="4.2" fill="#f6f6f6" stroke="#111" stroke-width="0.9"/><circle cx="5.2" cy="8.4" r="1.5" fill="#111"/><circle cx="11.2" cy="8.6" r="1.6" fill="#111"/></svg>
<div class="a" style="left:1552px;top:931px;width:14px;height:14px;background:#2a2a2a;"></div>
<div class="a" style="left:1553px;top:932px;width:12px;height:12px;background:#1e1e1e;"></div>
<svg class="a" style="left:1597px;top:933px;" width="8" height="10" viewBox="0 0 8 10"><path d="M0.5 0.5L7.5 5L0.5 9.5Z" fill="#c8c8c8"/></svg>
<svg class="a" style="left:1610px;top:928.5px;" width="16" height="14" viewBox="0 0 16 14"><path d="M1 4.5H15V13H1Z" fill="none" stroke="#d0d0d0" stroke-width="1.2"/><path d="M2.5 4.5V2.5Q2.5 1.5 3.5 1.5H6.5Q7.5 1.5 8 3L8.5 4.5" fill="none" stroke="#d0d0d0" stroke-width="1.1"/></svg>
<div class="t" style="left:1633px;top:928.75px;height:17.7px;line-height:17.7px;font-size:11.7px;color:#dcdcdc;">hands</div>
<div class="a" style="left:1517px;top:949px;width:381px;height:22px;background:#2e2e2e;"></div>
<div class="a" style="left:1524px;top:952px;width:19px;height:16px;background:#484848;border-radius:4px;border:1px solid #1a1a1a"></div>
<svg class="a" style="left:1524px;top:952px;" width="19" height="16" viewBox="0 0 19 16"><circle cx="6.3" cy="7.6" r="3.6" fill="#f6f6f6" stroke="#111" stroke-width="0.9"/><circle cx="11.8" cy="7.8" r="4.2" fill="#f6f6f6" stroke="#111" stroke-width="0.9"/><circle cx="5.2" cy="8.4" r="1.5" fill="#111"/><circle cx="11.2" cy="8.6" r="1.6" fill="#111"/></svg>
<div class="a" style="left:1552px;top:953px;width:14px;height:14px;background:#1e1e1e;"></div>
<svg class="a" style="left:1597px;top:955px;" width="8" height="10" viewBox="0 0 8 10"><path d="M0.5 0.5L7.5 5L0.5 9.5Z" fill="#c8c8c8"/></svg>
<svg class="a" style="left:1610px;top:950.5px;" width="16" height="14" viewBox="0 0 16 14"><path d="M1 4.5H15V13H1Z" fill="none" stroke="#d0d0d0" stroke-width="1.2"/><path d="M2.5 4.5V2.5Q2.5 1.5 3.5 1.5H6.5Q7.5 1.5 8 3L8.5 4.5" fill="none" stroke="#d0d0d0" stroke-width="1.1"/></svg>
<div class="t" style="left:1633px;top:950.75px;height:17.7px;line-height:17.7px;font-size:11.7px;color:#dcdcdc;">legs</div>
<div class="a" style="left:1517px;top:971px;width:381px;height:21px;background:#1e1e1e;"></div>
<div class="a" style="left:1525px;top:974px;width:17px;height:15px;background:#484848;border-radius:4px"></div>
<div class="a" style="left:1552px;top:975px;width:14px;height:14px;background:#2a2a2a;"></div>
<div class="a" style="left:1553px;top:976px;width:12px;height:12px;background:#1e1e1e;"></div>
<svg class="a" style="left:1582px;top:977px;" width="8" height="10" viewBox="0 0 8 10"><path d="M0.5 0.5L7.5 5L0.5 9.5Z" fill="#c8c8c8"/></svg>
<svg class="a" style="left:1595px;top:972.5px;" width="16" height="14" viewBox="0 0 16 14"><path d="M1 4.5H15V13H1Z" fill="none" stroke="#5a5a5a" stroke-width="1.2"/><path d="M2.5 4.5V2.5Q2.5 1.5 3.5 1.5H6.5Q7.5 1.5 8 3L8.5 4.5" fill="none" stroke="#5a5a5a" stroke-width="1.1"/></svg>
<div class="t" style="left:1618px;top:972.75px;height:17.7px;line-height:17.7px;font-size:11.7px;color:#7a7a7a;">2d.psd</div>
<svg class="a" style="left:1785px;top:780px;" width="10" height="8" viewBox="0 0 10 8"><path d="M0.5 0.5H9.5L5 7.5Z" fill="#c8d8d6"/></svg>
<div class="a" style="left:1898px;top:774px;width:21px;height:229px;background:#1e1e1e;"></div>
<div class="a" style="left:1900px;top:774px;width:18px;height:18px;background:#262626;"></div>
<svg class="a" style="left:1904px;top:778px;" width="10" height="9" viewBox="0 0 10 9"><path d="M5 0.5L9.5 8.5H0.5Z" fill="#6a6a6a"/></svg>
<div class="a" style="left:1900px;top:984px;width:18px;height:18px;background:#262626;"></div>
<svg class="a" style="left:1904px;top:989px;" width="10" height="9" viewBox="0 0 10 9"><path d="M0.5 0.5H9.5L5 8.5Z" fill="#6a6a6a"/></svg>
<div class="a" style="left:1517px;top:1003px;width:403px;height:20px;background:#1e1e1e;"></div>
<div class="a" style="left:1535px;top:1003px;width:1px;height:20px;background:#262626;"></div>
<svg class="a" style="left:1522px;top:1008px;" width="8" height="10" viewBox="0 0 8 10"><path d="M7.5 0.5L0.5 5L7.5 9.5Z" fill="#6a6a6a"/></svg>
<div class="a" style="left:1876px;top:1003px;width:1px;height:20px;background:#262626;"></div>
<svg class="a" style="left:1887px;top:1008px;" width="8" height="10" viewBox="0 0 8 10"><path d="M0.5 0.5L7.5 5L0.5 9.5Z" fill="#6a6a6a"/></svg>
<div class="a" style="left:1898px;top:1003px;width:22px;height:20px;background:#333;"></div>
<div class="a" style="left:596px;top:883px;width:23px;height:17px;background:#262626;border-radius:4px"></div>
<div class="a" style="left:621px;top:883px;width:23px;height:17px;background:#262626;border-radius:4px"></div>
<div class="a" style="left:646px;top:883px;width:23px;height:17px;background:#262626;border-radius:4px"></div>
<div class="a" style="left:671px;top:883px;width:23px;height:17px;background:#1e1e1e;border-radius:4px"></div>
<div class="a" style="left:695px;top:883px;width:23px;height:17px;background:#1e1e1e;border-radius:4px"></div>
<div class="a" style="left:720px;top:883px;width:23px;height:17px;background:#1e1e1e;border-radius:4px"></div>
<div class="a" style="left:745px;top:883px;width:23px;height:17px;background:#1e1e1e;border-radius:4px"></div>
<svg class="a" style="left:596px;top:883px;" width="23" height="17" viewBox="0 0 23 17"><circle cx="7" cy="8.5" r="3.6" fill="none" stroke="#8a8a8a" stroke-width="1"/><path d="M18.5 3.5V13.5L11.5 8.5Z" fill="none" stroke="#8a8a8a" stroke-width="1"/></svg>
<svg class="a" style="left:621px;top:883px;" width="23" height="17" viewBox="0 0 23 17"><rect x="5" y="3.5" width="3" height="10" fill="none" stroke="#8a8a8a" stroke-width="1"/><path d="M18.5 3.5V13.5L11.5 8.5Z" fill="none" stroke="#8a8a8a" stroke-width="1"/></svg>
<svg class="a" style="left:646px;top:883px;" width="23" height="17" viewBox="0 0 23 17"><path d="M11 3.5V13.5L4 8.5Z" fill="none" stroke="#8a8a8a" stroke-width="1"/><path d="M19 3.5V13.5L12 8.5Z" fill="none" stroke="#8a8a8a" stroke-width="1"/></svg>
<svg class="a" style="left:671px;top:883px;" width="23" height="17" viewBox="0 0 23 17"><path d="M7.5 3.5V13.5L15 8.5Z" fill="none" stroke="#e0e0e0" stroke-width="1.05"/></svg>
<svg class="a" style="left:695px;top:883px;" width="23" height="17" viewBox="0 0 23 17"><path d="M4 3.5V13.5L11 8.5Z" fill="none" stroke="#e0e0e0" stroke-width="1.05"/><path d="M12 3.5V13.5L19 8.5Z" fill="none" stroke="#e0e0e0" stroke-width="1.05"/></svg>
<svg class="a" style="left:720px;top:883px;" width="23" height="17" viewBox="0 0 23 17"><path d="M5 3.5V13.5L12 8.5Z" fill="none" stroke="#e0e0e0" stroke-width="1.05"/><rect x="14" y="3.5" width="3.5" height="10" fill="none" stroke="#e0e0e0" stroke-width="1.05"/></svg>
<svg class="a" style="left:745px;top:883px;" width="23" height="17" viewBox="0 0 23 17"><path d="M4 3.5V13.5L11 8.5Z" fill="none" stroke="#e0e0e0" stroke-width="1.05"/><circle cx="16" cy="8.5" r="3.6" fill="none" stroke="#e0e0e0" stroke-width="1.05"/></svg>
<div class="t" style="left:779px;top:883.25px;height:17.7px;line-height:17.7px;font-size:11.7px;color:#dcdcdc;">Frame</div>
<div class="a" style="left:817px;top:881px;width:72px;height:21px;background:#c0c0c0;border:1px solid #1a1a1a;border-radius:2px"></div>
<div class="t" style="left:820px;top:882.75px;height:17.7px;line-height:17.7px;font-size:11.7px;color:#1a1020;">0</div>
<div class="t" style="left:894px;top:883.25px;height:17.7px;line-height:17.7px;font-size:11.7px;color:#dcdcdc;">of</div>
<div class="a" style="left:910px;top:881px;width:72px;height:21px;background:#c0c0c0;border:1px solid #1a1a1a;border-radius:2px"></div>
<div class="t" style="left:913px;top:882.75px;height:17.7px;line-height:17.7px;font-size:11.7px;color:#1a1020;">240</div>
<div class="a" style="left:994px;top:883px;width:23px;height:17px;background:#1e1e1e;border-radius:4px"></div>
<svg class="a" style="left:994px;top:883px;" width="23" height="17" viewBox="0 0 23 17"><path d="M5 6.5H8L12 3V14L8 10.5H5Z" fill="none" stroke="#e0e0e0" stroke-width="1.2"/><path d="M14 6Q15.5 8.5 14 11M16 4.5Q18.5 8.5 16 12.5" fill="none" stroke="#e0e0e0" stroke-width="1.2"/></svg>
<div class="a" style="left:1275px;top:884px;width:15px;height:15px;border:1.5px solid #6cb4aa;background:#333"></div>
<svg class="a" style="left:1292px;top:884px;" width="15" height="15" viewBox="0 0 15 15"><rect x="0.5" y="0.5" width="14" height="14" fill="#8a827c" stroke="#c8c8c8"/><path d="M7.5 0.5V14.5" stroke="#c8c8c8" stroke-width="1.3"/></svg>
<svg class="a" style="left:1309px;top:884px;" width="15" height="15" viewBox="0 0 15 15"><rect x="0.5" y="0.5" width="14" height="14" fill="#8a827c" stroke="#c8c8c8"/><path d="M0.5 7.5H14.5" stroke="#c8c8c8" stroke-width="1.3"/></svg>
<svg class="a" style="left:1326px;top:884px;" width="15" height="15" viewBox="0 0 15 15"><rect x="0.5" y="0.5" width="14" height="14" fill="#8a827c" stroke="#c8c8c8"/><path d="M0.5 7.5H14.5M7.5 0.5V14.5" stroke="#c8c8c8" stroke-width="1.3"/></svg>
<div class="a" style="left:1351px;top:885px;width:14px;height:14px;background:#1e1e1e;"></div>
<svg class="a" style="left:1351px;top:885px;" width="14" height="14" viewBox="0 0 14 14"><path d="M2.5 7L6 11.5L12.5 1.5" stroke="#6cb4aa" stroke-width="2.2" fill="none"/></svg>
<svg class="a" style="left:1373px;top:885px;" width="14" height="14" viewBox="0 0 14 14"><rect x="2" y="2" width="10" height="10" fill="none" stroke="#c8c8c8" stroke-width="1.1"/><rect x="0.5" y="0.5" width="3" height="3" fill="#c8c8c8"/><rect x="10.5" y="0.5" width="3" height="3" fill="#6cb4aa"/><rect x="0.5" y="10.5" width="3" height="3" fill="#c8c8c8"/><rect x="10.5" y="10.5" width="3" height="3" fill="#c8c8c8"/></svg>
<div class="a" style="left:1393px;top:881px;width:116px;height:21px;background:#1e1e1e;border-radius:5px"></div>
<div class="t" style="left:1403px;top:883.25px;height:17.7px;line-height:17.7px;font-size:11.7px;color:#dcdcdc;">Display Quality</div>
<svg class="a" style="left:1490px;top:888px;" width="10" height="8" viewBox="0 0 10 8"><path d="M0.5 0.5H9.5L5 7.5Z" fill="#8a8a8a"/></svg>
<div class="a" style="left:42px;top:909px;width:1468px;height:24px;background:#333;"></div>
<div class="a" style="left:5px;top:936px;width:16px;height:16px;background:#1e1e1e;border-radius:3px"></div>
<svg class="a" style="left:5px;top:936px;" width="16" height="16" viewBox="0 0 16 16"><path d="M4 12L12 4M8 4H12V8M4 8V12H8" fill="none" stroke="#6cb4aa" stroke-width="1.3"/></svg>
<div class="a" style="left:59px;top:912px;width:64px;height:22px;background:#333;border:1px solid #1e1e1e;border-bottom:none;border-radius:4px 4px 0 0"></div>
<div class="a" style="left:123px;top:912px;width:69px;height:21px;background:#1e1e1e;border-radius:4px 4px 0 0"></div>
<div class="a" style="left:193px;top:912px;width:88px;height:21px;background:#1e1e1e;border-radius:4px 4px 0 0"></div>
<div class="t" style="left:67px;top:914.15px;height:17.9px;line-height:17.9px;font-size:11.9px;color:#dcdcdc;">Channels</div>
<div class="t" style="left:129px;top:913.15px;height:17.9px;line-height:17.9px;font-size:11.9px;color:#dcdcdc;">Sequencer</div>
<div class="t" style="left:199px;top:913.15px;height:17.9px;line-height:17.9px;font-size:11.9px;color:#dcdcdc;">Motion Graph</div>
<div class="a" style="left:314px;top:911px;width:99px;height:20px;background:#1e1e1e;border-radius:5px"></div>
<div class="t" style="left:336px;top:912.25px;height:17.7px;line-height:17.7px;font-size:11.7px;color:#dcdcdc;">Smooth</div>
<svg class="a" style="left:396px;top:918px;" width="10" height="8" viewBox="0 0 10 8"><path d="M0.5 0.5H9.5L5 7.5Z" fill="#8a8a8a"/></svg>
<div class="a" style="left:416px;top:911px;width:39px;height:20px;background:#1e1e1e;border-radius:5px"></div>
<div class="t" style="left:426px;top:912.25px;height:17.7px;line-height:17.7px;font-size:11.7px;color:#dcdcdc;">1</div>
<svg class="a" style="left:438px;top:918px;" width="10" height="8" viewBox="0 0 10 8"><path d="M0.5 0.5H9.5L5 7.5Z" fill="#8a8a8a"/></svg>
<div class="a" style="left:459px;top:912px;width:24px;height:18px;background:#1e1e1e;border-radius:4px"></div>
<svg class="a" style="left:459px;top:912px;" width="24" height="18" viewBox="0 0 24 18"><circle cx="10" cy="10.5" r="4.5" fill="none" stroke="#3e6e68" stroke-width="1.2"/><circle cx="12" cy="9" r="4.5" fill="none" stroke="#5a9890" stroke-width="1.2"/><circle cx="14" cy="7.5" r="4.5" fill="none" stroke="#6cb4aa" stroke-width="1.3"/></svg>
<div class="a" style="left:487px;top:911px;width:100px;height:20px;background:#1e1e1e;border-radius:5px"></div>
<div class="t" style="left:498px;top:912.25px;height:17.7px;line-height:17.7px;font-size:11.7px;color:#8a8a8a;">Onion Skins</div>
<svg class="a" style="left:570px;top:918px;" width="10" height="8" viewBox="0 0 10 8"><path d="M0.5 0.5H9.5L5 7.5Z" fill="#8a8a8a"/></svg>
<div class="a" style="left:594px;top:914px;width:14px;height:14px;background:#1e1e1e;"></div>
<div class="t" style="left:612px;top:912.75px;height:17.7px;line-height:17.7px;font-size:11.7px;color:#dcdcdc;">Relative keyframing</div>
<div class="a" style="left:723px;top:912px;width:24px;height:18px;background:#1e1e1e;border-radius:4px"></div>
<svg class="a" style="left:723px;top:912px;" width="24" height="18" viewBox="0 0 24 18"><path d="M8 3.5H16V11L12 14.5L8 11Z" fill="none" stroke="#6cb4aa" stroke-width="1.4"/></svg>
<div class="a" style="left:754px;top:914px;width:14px;height:14px;background:#1e1e1e;"></div>
<div class="t" style="left:772px;top:912.75px;height:17.7px;line-height:17.7px;font-size:11.7px;color:#dcdcdc;">Auto-freeze keys</div>
<div class="a" style="left:1457px;top:912px;width:24px;height:17px;background:#1e1e1e;border-radius:4px"></div>
<svg class="a" style="left:1457px;top:912px;" width="24" height="17" viewBox="0 0 24 17"><path d="M6 12H18L12 5.5Z" fill="none" stroke="#6cb4aa" stroke-width="1.4"/><circle cx="12" cy="9.8" r="1" fill="#6a6a6a"/></svg>
<div class="a" style="left:1483px;top:912px;width:24px;height:17px;background:#1e1e1e;border-radius:4px"></div>
<svg class="a" style="left:1483px;top:912px;" width="24" height="17" viewBox="0 0 24 17"><path d="M2 12H22M2.5 11.5L6 6H18L21.5 11.5" fill="none" stroke="#6cb4aa" stroke-width="1.3"/></svg>
<div class="a" style="left:42px;top:933px;width:1449px;height:17px;background:#1e1e1e;"></div>
<div class="a" style="left:58px;top:934px;width:1432px;height:16px;background:#4b6b66;"></div>
<svg class="a" style="left:58px;top:934px;" width="1432" height="16" viewBox="0 0 1432 16"><rect x="0" y="14" width="1" height="2" fill="#1e1e1e"/><rect x="8" y="14" width="1" height="2" fill="#1e1e1e"/><rect x="16" y="14" width="1" height="2" fill="#1e1e1e"/><rect x="24" y="14" width="1" height="2" fill="#1e1e1e"/><rect x="32" y="14" width="1" height="2" fill="#1e1e1e"/><rect x="40" y="12" width="1" height="4" fill="#1e1e1e"/><rect x="48" y="14" width="1" height="2" fill="#1e1e1e"/><rect x="56" y="14" width="1" height="2" fill="#1e1e1e"/><rect x="64" y="14" width="1" height="2" fill="#1e1e1e"/><rect x="72" y="14" width="1" height="2" fill="#1e1e1e"/><rect x="80" y="14" width="1" height="2" fill="#1e1e1e"/><rect x="88" y="12" width="1" height="4" fill="#1e1e1e"/><rect x="96" y="14" width="1" height="2" fill="#1e1e1e"/><rect x="104" y="14" width="1" height="2" fill="#1e1e1e"/><rect x="112" y="14" width="1" height="2" fill="#1e1e1e"/><rect x="120" y="14" width="1" height="2" fill="#1e1e1e"/><rect x="128" y="14" width="1" height="2" fill="#1e1e1e"/><rect x="136" y="12" width="1" height="4" fill="#1e1e1e"/><rect x="144" y="14" width="1" height="2" fill="#1e1e1e"/><rect x="152" y="14" width="1" height="2" fill="#1e1e1e"/><rect x="160" y="14" width="1" height="2" fill="#1e1e1e"/><rect x="168" y="14" width="1" height="2" fill="#1e1e1e"/><rect x="176" y="14" width="1" height="2" fill="#1e1e1e"/><rect x="184" y="12" width="1" height="4" fill="#1e1e1e"/><rect x="192" y="14" width="1" height="2" fill="#1e1e1e"/><rect x="200" y="14" width="1" height="2" fill="#1e1e1e"/><rect x="208" y="14" width="1" height="2" fill="#1e1e1e"/><rect x="216" y="14" width="1" height="2" fill="#1e1e1e"/><rect x="224" y="14" width="1" height="2" fill="#1e1e1e"/><rect x="232" y="12" width="1" height="4" fill="#1e1e1e"/><rect x="240" y="14" width="1" height="2" fill="#1e1e1e"/><rect x="248" y="14" width="1" height="2" fill="#1e1e1e"/><rect x="256" y="14" width="1" height="2" fill="#1e1e1e"/><rect x="264" y="14" width="1" height="2" fill="#1e1e1e"/><rect x="272" y="14" width="1" height="2" fill="#1e1e1e"/><rect x="280" y="12" width="1" height="4" fill="#1e1e1e"/><rect x="288" y="14" width="1" height="2" fill="#1e1e1e"/><rect x="296" y="14" width="1" height="2" fill="#1e1e1e"/><rect x="304" y="14" width="1" height="2" fill="#1e1e1e"/><rect x="312" y="14" width="1" height="2" fill="#1e1e1e"/><rect x="320" y="14" width="1" height="2" fill="#1e1e1e"/><rect x="328" y="12" width="1" height="4" fill="#1e1e1e"/><rect x="336" y="14" width="1" height="2" fill="#1e1e1e"/><rect x="344" y="14" width="1" height="2" fill="#1e1e1e"/><rect x="352" y="14" width="1" height="2" fill="#1e1e1e"/><rect x="360" y="14" width="1" height="2" fill="#1e1e1e"/><rect x="368" y="14" width="1" height="2" fill="#1e1e1e"/><rect x="376" y="12" width="1" height="4" fill="#1e1e1e"/><rect x="384" y="14" width="1" height="2" fill="#1e1e1e"/><rect x="392" y="14" width="1" height="2" fill="#1e1e1e"/><rect x="400" y="14" width="1" height="2" fill="#1e1e1e"/><rect x="408" y="14" width="1" height="2" fill="#1e1e1e"/><rect x="416" y="14" width="1" height="2" fill="#1e1e1e"/><rect x="424" y="12" width="1" height="4" fill="#1e1e1e"/><rect x="432" y="14" width="1" height="2" fill="#1e1e1e"/><rect x="440" y="14" width="1" height="2" fill="#1e1e1e"/><rect x="448" y="14" width="1" height="2" fill="#1e1e1e"/><rect x="456" y="14" width="1" height="2" fill="#1e1e1e"/><rect x="464" y="14" width="1" height="2" fill="#1e1e1e"/><rect x="472" y="12" width="1" height="4" fill="#1e1e1e"/><rect x="480" y="14" width="1" height="2" fill="#1e1e1e"/><rect x="488" y="14" width="1" height="2" fill="#1e1e1e"/><rect x="496" y="14" width="1" height="2" fill="#1e1e1e"/><rect x="504" y="14" width="1" height="2" fill="#1e1e1e"/><rect x="512" y="14" width="1" height="2" fill="#1e1e1e"/><rect x="520" y="12" width="1" height="4" fill="#1e1e1e"/><rect x="528" y="14" width="1" height="2" fill="#1e1e1e"/><rect x="536" y="14" width="1" height="2" fill="#1e1e1e"/><rect x="544" y="14" width="1" height="2" fill="#1e1e1e"/><rect x="552" y="14" width="1" height="2" fill="#1e1e1e"/><rect x="560" y="14" width="1" height="2" fill="#1e1e1e"/><rect x="568" y="12" width="1" height="4" fill="#1e1e1e"/><rect x="576" y="14" width="1" height="2" fill="#1e1e1e"/><rect x="584" y="14" width="1" height="2" fill="#1e1e1e"/><rect x="592" y="14" width="1" height="2" fill="#1e1e1e"/><rect x="600" y="14" width="1" height="2" fill="#1e1e1e"/><rect x="608" y="14" width="1" height="2" fill="#1e1e1e"/><rect x="616" y="12" width="1" height="4" fill="#1e1e1e"/><rect x="624" y="14" width="1" height="2" fill="#1e1e1e"/><rect x="632" y="14" width="1" height="2" fill="#1e1e1e"/><rect x="640" y="14" width="1" height="2" fill="#1e1e1e"/><rect x="648" y="14" width="1" height="2" fill="#1e1e1e"/><rect x="656" y="14" width="1" height="2" fill="#1e1e1e"/><rect x="664" y="12" width="1" height="4" fill="#1e1e1e"/><rect x="672" y="14" width="1" height="2" fill="#1e1e1e"/><rect x="680" y="14" width="1" height="2" fill="#1e1e1e"/><rect x="688" y="14" width="1" height="2" fill="#1e1e1e"/><rect x="696" y="14" width="1" height="2" fill="#1e1e1e"/><rect x="704" y="14" width="1" height="2" fill="#1e1e1e"/><rect x="712" y="12" width="1" height="4" fill="#1e1e1e"/><rect x="720" y="14" width="1" height="2" fill="#1e1e1e"/><rect x="728" y="14" width="1" height="2" fill="#1e1e1e"/><rect x="736" y="14" width="1" height="2" fill="#1e1e1e"/><rect x="744" y="14" width="1" height="2" fill="#1e1e1e"/><rect x="752" y="14" width="1" height="2" fill="#1e1e1e"/><rect x="760" y="12" width="1" height="4" fill="#1e1e1e"/><rect x="768" y="14" width="1" height="2" fill="#1e1e1e"/><rect x="776" y="14" width="1" height="2" fill="#1e1e1e"/><rect x="784" y="14" width="1" height="2" fill="#1e1e1e"/><rect x="792" y="14" width="1" height="2" fill="#1e1e1e"/><rect x="800" y="14" width="1" height="2" fill="#1e1e1e"/><rect x="808" y="12" width="1" height="4" fill="#1e1e1e"/><rect x="816" y="14" width="1" height="2" fill="#1e1e1e"/><rect x="824" y="14" width="1" height="2" fill="#1e1e1e"/><rect x="832" y="14" width="1" height="2" fill="#1e1e1e"/><rect x="840" y="14" width="1" height="2" fill="#1e1e1e"/><rect x="848" y="14" width="1" height="2" fill="#1e1e1e"/><rect x="856" y="12" width="1" height="4" fill="#1e1e1e"/><rect x="864" y="14" width="1" height="2" fill="#1e1e1e"/><rect x="872" y="14" width="1" height="2" fill="#1e1e1e"/><rect x="880" y="14" width="1" height="2" fill="#1e1e1e"/><rect x="888" y="14" width="1" height="2" fill="#1e1e1e"/><rect x="896" y="14" width="1" height="2" fill="#1e1e1e"/><rect x="904" y="12" width="1" height="4" fill="#1e1e1e"/><rect x="912" y="14" width="1" height="2" fill="#1e1e1e"/><rect x="920" y="14" width="1" height="2" fill="#1e1e1e"/><rect x="928" y="14" width="1" height="2" fill="#1e1e1e"/><rect x="936" y="14" width="1" height="2" fill="#1e1e1e"/><rect x="944" y="14" width="1" height="2" fill="#1e1e1e"/><rect x="952" y="12" width="1" height="4" fill="#1e1e1e"/><rect x="960" y="14" width="1" height="2" fill="#1e1e1e"/><rect x="968" y="14" width="1" height="2" fill="#1e1e1e"/><rect x="976" y="14" width="1" height="2" fill="#1e1e1e"/><rect x="984" y="14" width="1" height="2" fill="#1e1e1e"/><rect x="992" y="14" width="1" height="2" fill="#1e1e1e"/><rect x="1000" y="12" width="1" height="4" fill="#1e1e1e"/><rect x="1008" y="14" width="1" height="2" fill="#1e1e1e"/><rect x="1016" y="14" width="1" height="2" fill="#1e1e1e"/><rect x="1024" y="14" width="1" height="2" fill="#1e1e1e"/><rect x="1032" y="14" width="1" height="2" fill="#1e1e1e"/><rect x="1040" y="14" width="1" height="2" fill="#1e1e1e"/><rect x="1048" y="12" width="1" height="4" fill="#1e1e1e"/><rect x="1056" y="14" width="1" height="2" fill="#1e1e1e"/><rect x="1064" y="14" width="1" height="2" fill="#1e1e1e"/><rect x="1072" y="14" width="1" height="2" fill="#1e1e1e"/><rect x="1080" y="14" width="1" height="2" fill="#1e1e1e"/><rect x="1088" y="14" width="1" height="2" fill="#1e1e1e"/><rect x="1096" y="12" width="1" height="4" fill="#1e1e1e"/><rect x="1104" y="14" width="1" height="2" fill="#1e1e1e"/><rect x="1112" y="14" width="1" height="2" fill="#1e1e1e"/><rect x="1120" y="14" width="1" height="2" fill="#1e1e1e"/><rect x="1128" y="14" width="1" height="2" fill="#1e1e1e"/><rect x="1136" y="14" width="1" height="2" fill="#1e1e1e"/><rect x="1144" y="12" width="1" height="4" fill="#1e1e1e"/><rect x="1152" y="14" width="1" height="2" fill="#1e1e1e"/><rect x="1160" y="14" width="1" height="2" fill="#1e1e1e"/><rect x="1168" y="14" width="1" height="2" fill="#1e1e1e"/><rect x="1176" y="14" width="1" height="2" fill="#1e1e1e"/><rect x="1184" y="14" width="1" height="2" fill="#1e1e1e"/><rect x="1192" y="12" width="1" height="4" fill="#1e1e1e"/><rect x="1200" y="14" width="1" height="2" fill="#1e1e1e"/><rect x="1208" y="14" width="1" height="2" fill="#1e1e1e"/><rect x="1216" y="14" width="1" height="2" fill="#1e1e1e"/><rect x="1224" y="14" width="1" height="2" fill="#1e1e1e"/><rect x="1232" y="14" width="1" height="2" fill="#1e1e1e"/><rect x="1240" y="12" width="1" height="4" fill="#1e1e1e"/><rect x="1248" y="14" width="1" height="2" fill="#1e1e1e"/><rect x="1256" y="14" width="1" height="2" fill="#1e1e1e"/><rect x="1264" y="14" width="1" height="2" fill="#1e1e1e"/><rect x="1272" y="14" width="1" height="2" fill="#1e1e1e"/><rect x="1280" y="14" width="1" height="2" fill="#1e1e1e"/><rect x="1288" y="12" width="1" height="4" fill="#1e1e1e"/><rect x="1296" y="14" width="1" height="2" fill="#1e1e1e"/><rect x="1304" y="14" width="1" height="2" fill="#1e1e1e"/><rect x="1312" y="14" width="1" height="2" fill="#1e1e1e"/><rect x="1320" y="14" width="1" height="2" fill="#1e1e1e"/><rect x="1328" y="14" width="1" height="2" fill="#1e1e1e"/><rect x="1336" y="12" width="1" height="4" fill="#1e1e1e"/><rect x="1344" y="14" width="1" height="2" fill="#1e1e1e"/><rect x="1352" y="14" width="1" height="2" fill="#1e1e1e"/><rect x="1360" y="14" width="1" height="2" fill="#1e1e1e"/><rect x="1368" y="14" width="1" height="2" fill="#1e1e1e"/><rect x="1376" y="14" width="1" height="2" fill="#1e1e1e"/><rect x="1384" y="12" width="1" height="4" fill="#1e1e1e"/><rect x="1392" y="14" width="1" height="2" fill="#1e1e1e"/><rect x="1400" y="14" width="1" height="2" fill="#1e1e1e"/><rect x="1408" y="14" width="1" height="2" fill="#1e1e1e"/><rect x="1416" y="14" width="1" height="2" fill="#1e1e1e"/><rect x="1424" y="14" width="1" height="2" fill="#1e1e1e"/></svg>
<div class="a" style="left:58px;top:934px;width:1432px;height:16px;overflow:hidden">
<div class="t" style="left:20px;top:0px;width:40px;text-align:center;height:14px;line-height:14px;font-size:11.7px;color:#e0e0e0">6</div>
<div class="t" style="left:68px;top:0px;width:40px;text-align:center;height:14px;line-height:14px;font-size:11.7px;color:#e0e0e0">12</div>
<div class="t" style="left:116px;top:0px;width:40px;text-align:center;height:14px;line-height:14px;font-size:11.7px;color:#e0e0e0">18</div>
<div class="t" style="left:164px;top:0px;width:40px;text-align:center;height:14px;line-height:14px;font-size:11.7px;color:#e0e0e0">24</div>
<div class="t" style="left:212px;top:0px;width:40px;text-align:center;height:14px;line-height:14px;font-size:11.7px;color:#e0e0e0">30</div>
<div class="t" style="left:260px;top:0px;width:40px;text-align:center;height:14px;line-height:14px;font-size:11.7px;color:#e0e0e0">36</div>
<div class="t" style="left:308px;top:0px;width:40px;text-align:center;height:14px;line-height:14px;font-size:11.7px;color:#e0e0e0">42</div>
<div class="t" style="left:356px;top:0px;width:40px;text-align:center;height:14px;line-height:14px;font-size:11.7px;color:#e0e0e0">48</div>
<div class="t" style="left:404px;top:0px;width:40px;text-align:center;height:14px;line-height:14px;font-size:11.7px;color:#e0e0e0">54</div>
<div class="t" style="left:452px;top:0px;width:40px;text-align:center;height:14px;line-height:14px;font-size:11.7px;color:#e0e0e0">60</div>
<div class="t" style="left:500px;top:0px;width:40px;text-align:center;height:14px;line-height:14px;font-size:11.7px;color:#e0e0e0">66</div>
<div class="t" style="left:548px;top:0px;width:40px;text-align:center;height:14px;line-height:14px;font-size:11.7px;color:#e0e0e0">72</div>
<div class="t" style="left:596px;top:0px;width:40px;text-align:center;height:14px;line-height:14px;font-size:11.7px;color:#e0e0e0">78</div>
<div class="t" style="left:644px;top:0px;width:40px;text-align:center;height:14px;line-height:14px;font-size:11.7px;color:#e0e0e0">84</div>
<div class="t" style="left:692px;top:0px;width:40px;text-align:center;height:14px;line-height:14px;font-size:11.7px;color:#e0e0e0">90</div>
<div class="t" style="left:740px;top:0px;width:40px;text-align:center;height:14px;line-height:14px;font-size:11.7px;color:#e0e0e0">96</div>
<div class="t" style="left:788px;top:0px;width:40px;text-align:center;height:14px;line-height:14px;font-size:11.7px;color:#e0e0e0">102</div>
<div class="t" style="left:836px;top:0px;width:40px;text-align:center;height:14px;line-height:14px;font-size:11.7px;color:#e0e0e0">108</div>
<div class="t" style="left:884px;top:0px;width:40px;text-align:center;height:14px;line-height:14px;font-size:11.7px;color:#e0e0e0">114</div>
<div class="t" style="left:932px;top:0px;width:40px;text-align:center;height:14px;line-height:14px;font-size:11.7px;color:#e0e0e0">120</div>
<div class="t" style="left:980px;top:0px;width:40px;text-align:center;height:14px;line-height:14px;font-size:11.7px;color:#e0e0e0">126</div>
<div class="t" style="left:1028px;top:0px;width:40px;text-align:center;height:14px;line-height:14px;font-size:11.7px;color:#e0e0e0">132</div>
<div class="t" style="left:1076px;top:0px;width:40px;text-align:center;height:14px;line-height:14px;font-size:11.7px;color:#e0e0e0">138</div>
<div class="t" style="left:1124px;top:0px;width:40px;text-align:center;height:14px;line-height:14px;font-size:11.7px;color:#e0e0e0">144</div>
<div class="t" style="left:1172px;top:0px;width:40px;text-align:center;height:14px;line-height:14px;font-size:11.7px;color:#e0e0e0">150</div>
<div class="t" style="left:1220px;top:0px;width:40px;text-align:center;height:14px;line-height:14px;font-size:11.7px;color:#e0e0e0">156</div>
<div class="t" style="left:1268px;top:0px;width:40px;text-align:center;height:14px;line-height:14px;font-size:11.7px;color:#e0e0e0">162</div>
<div class="t" style="left:1316px;top:0px;width:40px;text-align:center;height:14px;line-height:14px;font-size:11.7px;color:#e0e0e0">168</div>
<div class="t" style="left:1364px;top:0px;width:40px;text-align:center;height:14px;line-height:14px;font-size:11.7px;color:#e0e0e0">174</div>
<div class="t" style="left:1412px;top:0px;width:40px;text-align:center;height:14px;line-height:14px;font-size:11.7px;color:#e0e0e0">180</div>
</div>
<div class="t" style="left:46px;top:932.25px;height:17.7px;line-height:17.7px;font-size:11.7px;color:#c8dce4;">0</div>
<svg class="a" style="left:58px;top:934px;" width="20" height="16" viewBox="0 0 20 16"><path d="M0 0L19 6.5L0 16Z" fill="#008c00"/></svg>
<svg class="a" style="left:45px;top:947px;" width="11" height="6" viewBox="0 0 11 6"><path d="M0.5 0.5H10.5L5.5 5.5Z" fill="#6cb4aa"/></svg>
<div class="a" style="left:42px;top:950px;width:1449px;height:17px;background:#1e1e1e;"></div>
<div class="a" style="left:42px;top:967px;width:1449px;height:36px;background:#2e2e2e;"></div>
<div class="t" style="left:47px;top:967.6px;height:17px;line-height:17px;font-size:11px;color:#8c8c8c;">0</div>
<div class="t" style="left:239px;top:967.6px;height:17px;line-height:17px;font-size:11px;color:#8c8c8c;">1</div>
<div class="a" style="left:242px;top:981px;width:2px;height:21px;background:#a8a8a8;"></div>
<div class="t" style="left:431px;top:967.6px;height:17px;line-height:17px;font-size:11px;color:#8c8c8c;">2</div>
<div class="a" style="left:434px;top:981px;width:2px;height:21px;background:#a8a8a8;"></div>
<div class="t" style="left:623px;top:967.6px;height:17px;line-height:17px;font-size:11px;color:#8c8c8c;">3</div>
<div class="a" style="left:626px;top:981px;width:2px;height:21px;background:#a8a8a8;"></div>
<div class="t" style="left:815px;top:967.6px;height:17px;line-height:17px;font-size:11px;color:#8c8c8c;">4</div>
<div class="a" style="left:818px;top:981px;width:2px;height:21px;background:#a8a8a8;"></div>
<div class="t" style="left:1007px;top:967.6px;height:17px;line-height:17px;font-size:11px;color:#8c8c8c;">5</div>
<div class="a" style="left:1010px;top:981px;width:2px;height:21px;background:#a8a8a8;"></div>
<div class="t" style="left:1199px;top:967.6px;height:17px;line-height:17px;font-size:11px;color:#8c8c8c;">6</div>
<div class="a" style="left:1202px;top:981px;width:2px;height:21px;background:#a8a8a8;"></div>
<div class="t" style="left:1391px;top:967.6px;height:17px;line-height:17px;font-size:11px;color:#8c8c8c;">7</div>
<div class="a" style="left:1394px;top:981px;width:2px;height:21px;background:#a8a8a8;"></div>
<div class="a" style="left:50px;top:950px;width:1px;height:52px;background:#70c0b8;"></div>
<div class="a" style="left:49px;top:950px;width:1px;height:52px;background:#4a8a84;"></div>
<div class="a" style="left:1490px;top:934px;width:20px;height:69px;background:#1e1e1e;"></div>
<div class="a" style="left:1491px;top:934px;width:18px;height:18px;background:#262626;"></div>
<svg class="a" style="left:1495px;top:938px;" width="10" height="9" viewBox="0 0 10 9"><path d="M5 0.5L9.5 8.5H0.5Z" fill="#6a6a6a"/></svg>
<div class="a" style="left:1491px;top:984px;width:18px;height:18px;background:#262626;"></div>
<svg class="a" style="left:1495px;top:989px;" width="10" height="9" viewBox="0 0 10 9"><path d="M0.5 0.5H9.5L5 8.5Z" fill="#6a6a6a"/></svg>
<div class="a" style="left:42px;top:1003px;width:1448px;height:19px;background:#1e1e1e;"></div>
<div class="a" style="left:62px;top:1004px;width:39px;height:17px;background:#333;"></div>
<div class="a" style="left:60px;top:1003px;width:1px;height:19px;background:#262626;"></div>
<svg class="a" style="left:47px;top:1008px;" width="8" height="10" viewBox="0 0 8 10"><path d="M7.5 0.5L0.5 5L7.5 9.5Z" fill="#6a6a6a"/></svg>
<div class="a" style="left:1470px;top:1003px;width:1px;height:19px;background:#262626;"></div>
<svg class="a" style="left:1476px;top:1008px;" width="8" height="10" viewBox="0 0 8 10"><path d="M0.5 0.5L7.5 5L0.5 9.5Z" fill="#6a6a6a"/></svg>
<div class="a" style="left:1490px;top:1003px;width:20px;height:20px;background:#333;"></div>
<div class="a" style="left:76px;top:144px;width:25px;height:21px;border:1px solid #6cb4aa;background:#3b4645"></div>
<svg class="a" style="left:1px;top:144px;" width="25" height="21" viewBox="0 0 25 21"><rect x="7.9525" y="5.795" width="9.095" height="3.91" fill="#d4d4d4"/><rect x="5.18575" y="6.135" width="5.27" height="3.2300000000000004" fill="#d4d4d4"/><circle cx="6.635" cy="6.135" r="2.635" fill="#d4d4d4"/><circle cx="6.635" cy="9.365" r="2.635" fill="#d4d4d4"/><rect x="16.915750000000003" y="6.135" width="2.8985" height="3.2300000000000004" fill="#d4d4d4"/><rect x="14.544250000000003" y="6.135" width="5.27" height="3.2300000000000004" fill="#d4d4d4"/><circle cx="18.365000000000002" cy="6.135" r="2.635" fill="#d4d4d4"/><circle cx="18.365000000000002" cy="9.365" r="2.635" fill="#d4d4d4"/><rect x="7.9525" y="6.895" width="9.095" height="1.71" fill="#333"/><rect x="5.79075" y="6.135" width="4.06" height="3.2300000000000004" fill="#333"/><circle cx="6.635" cy="6.135" r="1.5349999999999997" fill="#333"/><circle cx="6.635" cy="9.365" r="1.5349999999999997" fill="#333"/><rect x="17.520750000000003" y="6.135" width="1.6885" height="3.2300000000000004" fill="#333"/><rect x="15.149250000000004" y="6.135" width="4.06" height="3.2300000000000004" fill="#333"/><circle cx="18.365000000000002" cy="6.135" r="1.5349999999999997" fill="#333"/><circle cx="18.365000000000002" cy="9.365" r="1.5349999999999997" fill="#333"/><path d="M10.5 8L10.5 17L12.8 14.8L14.8 18.5L16 17.8L14.2 14.2L17.2 13.8Z" fill="#6cb4aa"/></svg>
<svg class="a" style="left:26px;top:144px;" width="25" height="21" viewBox="0 0 25 21"><rect x="7.9525" y="5.295" width="9.095" height="3.91" fill="#d4d4d4"/><rect x="5.18575" y="5.635" width="5.27" height="3.2300000000000004" fill="#d4d4d4"/><circle cx="6.635" cy="5.635" r="2.635" fill="#d4d4d4"/><circle cx="6.635" cy="8.865" r="2.635" fill="#d4d4d4"/><rect x="16.915750000000003" y="5.635" width="2.8985" height="3.2300000000000004" fill="#d4d4d4"/><rect x="14.544250000000003" y="5.635" width="5.27" height="3.2300000000000004" fill="#d4d4d4"/><circle cx="18.365000000000002" cy="5.635" r="2.635" fill="#d4d4d4"/><circle cx="18.365000000000002" cy="8.865" r="2.635" fill="#d4d4d4"/><rect x="7.9525" y="6.395" width="9.095" height="1.71" fill="#333"/><rect x="5.79075" y="5.635" width="4.06" height="3.2300000000000004" fill="#333"/><circle cx="6.635" cy="5.635" r="1.5349999999999997" fill="#333"/><circle cx="6.635" cy="8.865" r="1.5349999999999997" fill="#333"/><rect x="17.520750000000003" y="5.635" width="1.6885" height="3.2300000000000004" fill="#333"/><rect x="15.149250000000004" y="5.635" width="4.06" height="3.2300000000000004" fill="#333"/><circle cx="18.365000000000002" cy="5.635" r="1.5349999999999997" fill="#333"/><circle cx="18.365000000000002" cy="8.865" r="1.5349999999999997" fill="#333"/><path d="M12.5 12.5V18M9.8 15.2H15.2" stroke="#6cb4aa" stroke-width="2.2"/></svg>
<svg class="a" style="left:51px;top:144px;" width="25" height="21" viewBox="0 0 25 21"><rect x="7.9525" y="5.295" width="9.095" height="3.91" fill="#d4d4d4"/><rect x="5.18575" y="5.635" width="5.27" height="3.2300000000000004" fill="#d4d4d4"/><circle cx="6.635" cy="5.635" r="2.635" fill="#d4d4d4"/><circle cx="6.635" cy="8.865" r="2.635" fill="#d4d4d4"/><rect x="16.915750000000003" y="5.635" width="2.8985" height="3.2300000000000004" fill="#d4d4d4"/><rect x="14.544250000000003" y="5.635" width="5.27" height="3.2300000000000004" fill="#d4d4d4"/><circle cx="18.365000000000002" cy="5.635" r="2.635" fill="#d4d4d4"/><circle cx="18.365000000000002" cy="8.865" r="2.635" fill="#d4d4d4"/><rect x="7.9525" y="6.395" width="9.095" height="1.71" fill="#333"/><rect x="5.79075" y="5.635" width="4.06" height="3.2300000000000004" fill="#333"/><circle cx="6.635" cy="5.635" r="1.5349999999999997" fill="#333"/><circle cx="6.635" cy="8.865" r="1.5349999999999997" fill="#333"/><rect x="17.520750000000003" y="5.635" width="1.6885" height="3.2300000000000004" fill="#333"/><rect x="15.149250000000004" y="5.635" width="4.06" height="3.2300000000000004" fill="#333"/><circle cx="18.365000000000002" cy="5.635" r="1.5349999999999997" fill="#333"/><circle cx="18.365000000000002" cy="8.865" r="1.5349999999999997" fill="#333"/><path d="M15.5 13.2A3 3 0 1 0 15.5 17.8" fill="none" stroke="#6cb4aa" stroke-width="1.8"/></svg>
<svg class="a" style="left:76px;top:144px;" width="25" height="21" viewBox="0 0 25 21"><rect x="7.9525" y="8.295" width="9.095" height="3.91" fill="#d4d4d4"/><rect x="5.18575" y="8.635" width="5.27" height="3.2300000000000004" fill="#d4d4d4"/><circle cx="6.635" cy="8.635" r="2.635" fill="#d4d4d4"/><circle cx="6.635" cy="11.865" r="2.635" fill="#d4d4d4"/><rect x="16.915750000000003" y="8.635" width="2.8985" height="3.2300000000000004" fill="#d4d4d4"/><rect x="14.544250000000003" y="8.635" width="5.27" height="3.2300000000000004" fill="#d4d4d4"/><circle cx="18.365000000000002" cy="8.635" r="2.635" fill="#d4d4d4"/><circle cx="18.365000000000002" cy="11.865" r="2.635" fill="#d4d4d4"/><rect x="7.9525" y="9.395" width="9.095" height="1.71" fill="#3b4645"/><rect x="5.79075" y="8.635" width="4.06" height="3.2300000000000004" fill="#3b4645"/><circle cx="6.635" cy="8.635" r="1.5349999999999997" fill="#3b4645"/><circle cx="6.635" cy="11.865" r="1.5349999999999997" fill="#3b4645"/><rect x="17.520750000000003" y="8.635" width="1.6885" height="3.2300000000000004" fill="#3b4645"/><rect x="15.149250000000004" y="8.635" width="4.06" height="3.2300000000000004" fill="#3b4645"/><circle cx="18.365000000000002" cy="8.635" r="1.5349999999999997" fill="#3b4645"/><circle cx="18.365000000000002" cy="11.865" r="1.5349999999999997" fill="#3b4645"/><path d="M9.5 4.5L12.5 1.5L15.5 4.5Z" fill="#6cb4aa"/><path d="M9.5 16.5L12.5 19.5L15.5 16.5Z" fill="#6cb4aa"/></svg>
<svg class="a" style="left:1px;top:165px;" width="25" height="21" viewBox="0 0 25 21"><rect x="7.9525" y="4.795" width="9.095" height="3.91" fill="#d4d4d4"/><rect x="5.18575" y="5.135" width="5.27" height="3.2300000000000004" fill="#d4d4d4"/><circle cx="6.635" cy="5.135" r="2.635" fill="#d4d4d4"/><circle cx="6.635" cy="8.365" r="2.635" fill="#d4d4d4"/><rect x="16.915750000000003" y="5.135" width="2.8985" height="3.2300000000000004" fill="#d4d4d4"/><rect x="14.544250000000003" y="5.135" width="5.27" height="3.2300000000000004" fill="#d4d4d4"/><circle cx="18.365000000000002" cy="5.135" r="2.635" fill="#d4d4d4"/><circle cx="18.365000000000002" cy="8.365" r="2.635" fill="#d4d4d4"/><rect x="7.9525" y="5.895" width="9.095" height="1.71" fill="#333"/><rect x="5.79075" y="5.135" width="4.06" height="3.2300000000000004" fill="#333"/><circle cx="6.635" cy="5.135" r="1.5349999999999997" fill="#333"/><circle cx="6.635" cy="8.365" r="1.5349999999999997" fill="#333"/><rect x="17.520750000000003" y="5.135" width="1.6885" height="3.2300000000000004" fill="#333"/><rect x="15.149250000000004" y="5.135" width="4.06" height="3.2300000000000004" fill="#333"/><circle cx="18.365000000000002" cy="5.135" r="1.5349999999999997" fill="#333"/><circle cx="18.365000000000002" cy="8.365" r="1.5349999999999997" fill="#333"/><rect x="11.79" y="14.120000000000001" width="6.42" height="2.7600000000000002" fill="#d4d4d4"/><rect x="9.837" y="14.36" width="3.7199999999999998" height="2.2800000000000002" fill="#d4d4d4"/><circle cx="10.86" cy="14.36" r="1.8599999999999999" fill="#d4d4d4"/><circle cx="10.86" cy="16.64" r="1.8599999999999999" fill="#d4d4d4"/><rect x="18.117" y="14.36" width="2.046" height="2.2800000000000002" fill="#d4d4d4"/><rect x="16.443" y="14.36" width="3.7199999999999998" height="2.2800000000000002" fill="#d4d4d4"/><circle cx="19.14" cy="14.36" r="1.8599999999999999" fill="#d4d4d4"/><circle cx="19.14" cy="16.64" r="1.8599999999999999" fill="#d4d4d4"/><rect x="11.79" y="15.22" width="6.42" height="0.56" fill="#333"/><rect x="10.442" y="14.36" width="2.51" height="2.2800000000000002" fill="#333"/><circle cx="10.86" cy="14.36" r="0.7599999999999998" fill="#333"/><circle cx="10.86" cy="16.64" r="0.7599999999999998" fill="#333"/><rect x="18.722" y="14.36" width="0.8359999999999999" height="2.2800000000000002" fill="#333"/><rect x="17.048000000000002" y="14.36" width="2.51" height="2.2800000000000002" fill="#333"/><circle cx="19.14" cy="14.36" r="0.7599999999999998" fill="#333"/><circle cx="19.14" cy="16.64" r="0.7599999999999998" fill="#333"/><path d="M5.5 13V16.5H8.5" fill="none" stroke="#6cb4aa" stroke-width="1.2"/></svg>
<svg class="a" style="left:26px;top:165px;" width="25" height="21" viewBox="0 0 25 21"><rect x="1.5" y="3" width="21" height="14" rx="7" fill="none" stroke="#6cb4aa" stroke-width="1.6"/><rect x="8.719999999999999" y="8.16" width="7.5600000000000005" height="3.68" fill="#d4d4d4"/><rect x="6.1160000000000005" y="8.48" width="4.960000000000001" height="3.04" fill="#d4d4d4"/><circle cx="7.48" cy="8.48" r="2.48" fill="#d4d4d4"/><circle cx="7.48" cy="11.52" r="2.48" fill="#d4d4d4"/><rect x="16.156" y="8.48" width="2.728" height="3.04" fill="#d4d4d4"/><rect x="13.924" y="8.48" width="4.960000000000001" height="3.04" fill="#d4d4d4"/><circle cx="17.52" cy="8.48" r="2.48" fill="#d4d4d4"/><circle cx="17.52" cy="11.52" r="2.48" fill="#d4d4d4"/><rect x="8.719999999999999" y="9.26" width="7.5600000000000005" height="1.48" fill="#333"/><rect x="6.721" y="8.48" width="3.75" height="3.04" fill="#333"/><circle cx="7.48" cy="8.48" r="1.38" fill="#333"/><circle cx="7.48" cy="11.52" r="1.38" fill="#333"/><rect x="16.761" y="8.48" width="1.518" height="3.04" fill="#333"/><rect x="14.529" y="8.48" width="3.75" height="3.04" fill="#333"/><circle cx="17.52" cy="8.48" r="1.38" fill="#333"/><circle cx="17.52" cy="11.52" r="1.38" fill="#333"/></svg>
<svg class="a" style="left:51px;top:165px;" width="25" height="21" viewBox="0 0 25 21"><circle cx="13" cy="10.5" r="8" fill="none" stroke="#6cb4aa" stroke-width="0.9" stroke-dasharray="1.2 1.6"/><path d="M5.5 1.5L10 5M20.5 1.5L16 5M5.5 16.5L10 13M20.5 16.5L16 13" stroke="#d0d0d0" stroke-width="1.8" stroke-linecap="round"/><path d="M4 10.3H22" stroke="#d8d8d8" stroke-width="1.6"/><circle cx="13" cy="3.8" r="2.4" fill="#d0d0d0"/><path d="M11 6.5H15V12.5L14.8 18.8H13.6L13 14L12.4 18.8H11.2L11 12.5Z" fill="#d0d0d0"/></svg>
<svg class="a" style="left:76px;top:165px;" width="25" height="21" viewBox="0 0 25 21"><rect x="6.9525" y="7.795" width="9.095" height="3.91" fill="#d4d4d4"/><rect x="4.18575" y="8.135" width="5.27" height="3.2300000000000004" fill="#d4d4d4"/><circle cx="5.635" cy="8.135" r="2.635" fill="#d4d4d4"/><circle cx="5.635" cy="11.365" r="2.635" fill="#d4d4d4"/><rect x="15.915750000000003" y="8.135" width="2.8985" height="3.2300000000000004" fill="#d4d4d4"/><rect x="13.544250000000003" y="8.135" width="5.27" height="3.2300000000000004" fill="#d4d4d4"/><circle cx="17.365000000000002" cy="8.135" r="2.635" fill="#d4d4d4"/><circle cx="17.365000000000002" cy="11.365" r="2.635" fill="#d4d4d4"/><rect x="6.9525" y="8.895" width="9.095" height="1.71" fill="#333"/><rect x="4.79075" y="8.135" width="4.06" height="3.2300000000000004" fill="#333"/><circle cx="5.635" cy="8.135" r="1.5349999999999997" fill="#333"/><circle cx="5.635" cy="11.365" r="1.5349999999999997" fill="#333"/><rect x="16.520750000000003" y="8.135" width="1.6885" height="3.2300000000000004" fill="#333"/><rect x="14.149250000000004" y="8.135" width="4.06" height="3.2300000000000004" fill="#333"/><circle cx="17.365000000000002" cy="8.135" r="1.5349999999999997" fill="#333"/><circle cx="17.365000000000002" cy="11.365" r="1.5349999999999997" fill="#333"/><path d="M14 15L20.5 8L23 10.5L16.5 17.5Z" fill="#6cb4aa"/><path d="M14 15L13 18.5L16.5 17.5Z" fill="#6cb4aa"/></svg>
<svg class="a" style="left:1px;top:186px;" width="25" height="21" viewBox="0 0 25 21"><rect x="8.9525" y="5.295" width="9.095" height="3.91" fill="#d4d4d4"/><rect x="6.18575" y="5.635" width="5.27" height="3.2300000000000004" fill="#d4d4d4"/><circle cx="7.635" cy="5.635" r="2.635" fill="#d4d4d4"/><circle cx="7.635" cy="8.865" r="2.635" fill="#d4d4d4"/><rect x="17.915750000000003" y="5.635" width="2.8985" height="3.2300000000000004" fill="#d4d4d4"/><rect x="15.544250000000003" y="5.635" width="5.27" height="3.2300000000000004" fill="#d4d4d4"/><circle cx="19.365000000000002" cy="5.635" r="2.635" fill="#d4d4d4"/><circle cx="19.365000000000002" cy="8.865" r="2.635" fill="#d4d4d4"/><rect x="8.9525" y="6.395" width="9.095" height="1.71" fill="#333"/><rect x="6.79075" y="5.635" width="4.06" height="3.2300000000000004" fill="#333"/><circle cx="7.635" cy="5.635" r="1.5349999999999997" fill="#333"/><circle cx="7.635" cy="8.865" r="1.5349999999999997" fill="#333"/><rect x="18.520750000000003" y="5.635" width="1.6885" height="3.2300000000000004" fill="#333"/><rect x="16.149250000000002" y="5.635" width="4.06" height="3.2300000000000004" fill="#333"/><circle cx="19.365000000000002" cy="5.635" r="1.5349999999999997" fill="#333"/><circle cx="19.365000000000002" cy="8.865" r="1.5349999999999997" fill="#333"/><path d="M3 8.5V15.5H13" fill="none" stroke="#6cb4aa" stroke-width="1.6"/><path d="M12.5 12.5L16 15.5L12.5 18.5Z" fill="#6cb4aa"/></svg>
<svg class="a" style="left:26px;top:186px;" width="25" height="21" viewBox="0 0 25 21"><g stroke="#46706a" stroke-width="0.9" fill="none"><ellipse cx="10" cy="8.5" rx="8" ry="2.2"/><ellipse cx="10" cy="8.5" rx="8" ry="2.2" transform="rotate(60 10 8.5)"/><ellipse cx="10" cy="8.5" rx="8" ry="2.2" transform="rotate(-60 10 8.5)"/></g><rect x="15.79" y="14.620000000000001" width="5.42" height="2.7600000000000002" fill="#5a5a5a"/><rect x="13.837" y="14.86" width="3.7199999999999998" height="2.2800000000000002" fill="#5a5a5a"/><circle cx="14.86" cy="14.86" r="1.8599999999999999" fill="#5a5a5a"/><circle cx="14.86" cy="17.14" r="1.8599999999999999" fill="#5a5a5a"/><rect x="21.117" y="14.86" width="2.046" height="2.2800000000000002" fill="#5a5a5a"/><rect x="19.443" y="14.86" width="3.7199999999999998" height="2.2800000000000002" fill="#5a5a5a"/><circle cx="22.14" cy="14.86" r="1.8599999999999999" fill="#5a5a5a"/><circle cx="22.14" cy="17.14" r="1.8599999999999999" fill="#5a5a5a"/><rect x="15.79" y="15.520000000000001" width="5.42" height="0.9600000000000002" fill="#333"/><rect x="14.331999999999999" y="14.86" width="2.7299999999999995" height="2.2800000000000002" fill="#333"/><circle cx="14.86" cy="14.86" r="0.9599999999999999" fill="#333"/><circle cx="14.86" cy="17.14" r="0.9599999999999999" fill="#333"/><rect x="21.612000000000002" y="14.86" width="1.0559999999999998" height="2.2800000000000002" fill="#333"/><rect x="19.938000000000002" y="14.86" width="2.7299999999999995" height="2.2800000000000002" fill="#333"/><circle cx="22.14" cy="14.86" r="0.9599999999999999" fill="#333"/><circle cx="22.14" cy="17.14" r="0.9599999999999999" fill="#333"/></svg>
<svg class="a" style="left:51px;top:186px;" width="25" height="21" viewBox="0 0 25 21"><g fill="none" stroke="#6cb4aa" stroke-width="1.2"><path d="M6 7.2H12Q14 7.2 14 5.2Q14 3.3 12.2 3.3Q10.6 3.3 10.5 4.8"/><path d="M6 10H17.5Q19.6 10 19.6 8Q19.6 6 17.6 6Q16 6 15.9 7.5"/><path d="M6 12.8H13.5Q15.5 12.8 15.5 14.8Q15.5 16.8 13.6 16.8Q12 16.8 11.8 15.3"/></g></svg>
<svg class="a" style="left:1px;top:227px;" width="25" height="21" viewBox="0 0 25 21"><path d="M5 5.5L8 2.5H16V19H5Z" fill="none" stroke="#d4d4d4" stroke-width="1.2"/><path d="M5 5.5H8V2.5" fill="none" stroke="#d4d4d4" stroke-width="1"/><path d="M10.5 8V17M6.5 12.5H14.5" stroke="#6cb4aa" stroke-width="1.5"/><path d="M8.8 9.5L10.5 7.5L12.2 9.5ZM8.8 15.5L10.5 17.5L12.2 15.5ZM8 10.8L6 12.5L8 14.2ZM13 10.8L15 12.5L13 14.2Z" fill="#6cb4aa"/></svg>
<svg class="a" style="left:26px;top:227px;" width="25" height="21" viewBox="0 0 25 21"><path d="M12.5 3V18M5 10.5H20" stroke="#d4d4d4" stroke-width="1.6"/></svg>
<svg class="a" style="left:51px;top:227px;" width="25" height="21" viewBox="0 0 25 21"><path d="M5.5 16.5V12Q5.5 4 12.5 4Q19 4 19.5 12" fill="none" stroke="#d4d4d4" stroke-width="1.2"/><path d="M15.5 12H23L19.3 16Z" fill="#d4d4d4"/></svg>
<svg class="a" style="left:76px;top:227px;" width="25" height="21" viewBox="0 0 25 21"><path d="M5 7L8.5 3H19.5L22.5 16H2.5Z" fill="none" stroke="#d4d4d4" stroke-width="1.2"/><path d="M5 7H8.5V3" fill="none" stroke="#d4d4d4" stroke-width="1"/><path d="M12.5 6V12" stroke="#6cb4aa" stroke-width="1.6"/><path d="M9 10.5H16L12.5 14Z" fill="#6cb4aa"/></svg>
<svg class="a" style="left:1px;top:248px;" width="25" height="21" viewBox="0 0 25 21"><path d="M6.5 6.5L9.5 3H20.5L17.5 18H4.5Z" fill="none" stroke="#d4d4d4" stroke-width="1.2"/><path d="M8 11H14.5" stroke="#6cb4aa" stroke-width="1.6"/><path d="M14 8.5L17 11L14 13.5Z" fill="#6cb4aa"/></svg>
<svg class="a" style="left:26px;top:248px;" width="25" height="21" viewBox="0 0 25 21"><rect x="3.5" y="10" width="7" height="8" fill="none" stroke="#d4d4d4" stroke-width="1.2"/><rect x="6.5" y="6.5" width="7" height="8" fill="#333" stroke="#d4d4d4" stroke-width="1.2"/><rect x="10" y="3" width="7" height="8" fill="#333" stroke="#d4d4d4" stroke-width="1.2"/><path d="M13 7.5L13 17L15.2 15L17 18.2L18 17.6L16.3 14.4L19.2 14Z" fill="#6cb4aa"/></svg>
<div class="t" style="left:51px;top:246px;width:25px;height:24px;line-height:24px;text-align:center;font-family:'Liberation Serif',serif;font-size:17px;color:#d4d4d4">T</div>
<svg class="a" style="left:76px;top:248px;" width="25" height="21" viewBox="0 0 25 21"><path d="M3.5 18.5L15 7" stroke="#d4d4d4" stroke-width="3.4" stroke-linecap="round"/><path d="M3.5 18.5L15 7" stroke="#333" stroke-width="1.2" stroke-linecap="round"/><path d="M13 4.5L17 8.5L21.5 4L17.5 0Z" fill="#6cb4aa"/><path d="M12 6L16 10" stroke="#6cb4aa" stroke-width="2.8"/></svg>
<svg class="a" style="left:1px;top:289px;" width="25" height="21" viewBox="0 0 25 21"><path d="M2 7H5.5L7 4.5H12L13.5 7H16V15.5H2Z" fill="none" stroke="#d4d4d4" stroke-width="1.2" stroke-linejoin="round"/><circle cx="9" cy="11" r="2.6" fill="none" stroke="#d4d4d4" stroke-width="1.2"/><path d="M20.8 13.5V19.5M17.8 16.5H23.8" stroke="#6cb4aa" stroke-width="1.4"/></svg>
<svg class="a" style="left:26px;top:289px;" width="25" height="21" viewBox="0 0 25 21"><path d="M2 7H5.5L7 4.5H12L13.5 7H16V15.5H2Z" fill="none" stroke="#d4d4d4" stroke-width="1.2" stroke-linejoin="round"/><circle cx="9" cy="11" r="2.6" fill="none" stroke="#d4d4d4" stroke-width="1.2"/><path d="M20 11V19" stroke="#6cb4aa" stroke-width="1.2"/><path d="M18 12.5L20 10L22 12.5ZM18 17.5L20 20L22 17.5Z" fill="#6cb4aa"/></svg>
<svg class="a" style="left:51px;top:289px;" width="25" height="21" viewBox="0 0 25 21"><path d="M2 7H5.5L7 4.5H12L13.5 7H16V15.5H2Z" fill="none" stroke="#d4d4d4" stroke-width="1.2" stroke-linejoin="round"/><circle cx="9" cy="11" r="2.6" fill="none" stroke="#d4d4d4" stroke-width="1.2"/><path d="M17.5 19.5Q20.5 18 20.5 14" fill="none" stroke="#6cb4aa" stroke-width="1.6"/><path d="M18.5 14.5L20.7 11.5L22.5 14.5Z" fill="#6cb4aa"/></svg>
<svg class="a" style="left:76px;top:289px;" width="25" height="21" viewBox="0 0 25 21"><path d="M2 7H5.5L7 4.5H12L13.5 7H16V15.5H2Z" fill="none" stroke="#d4d4d4" stroke-width="1.2" stroke-linejoin="round"/><circle cx="9" cy="11" r="2.6" fill="none" stroke="#d4d4d4" stroke-width="1.2"/><path d="M19 5Q23.5 11 19 18" fill="none" stroke="#6cb4aa" stroke-width="1.8"/><path d="M18 4H20M18 19H20" stroke="#6cb4aa" stroke-width="1.6"/></svg>
<svg class="a" style="left:1px;top:330px;" width="25" height="21" viewBox="0 0 25 21"><path d="M9 17Q5 15 3.5 11.5Q4 10 5.5 11L8 13V4.5Q8 3 9.2 3Q10.4 3 10.4 4.5V10V3Q10.4 1.8 11.6 1.8Q12.8 1.8 12.8 3V10V3.8Q12.8 2.5 14 2.5Q15.2 2.5 15.2 3.8V10V5.5Q15.2 4.3 16.4 4.3Q17.6 4.3 17.6 5.5V13Q17.6 19 12 19Q10 19 9 17Z" fill="none" stroke="#d4d4d4" stroke-width="1.1"/></svg>
<svg class="a" style="left:26px;top:330px;" width="25" height="21" viewBox="0 0 25 21"><circle cx="10" cy="8.5" r="5" fill="none" stroke="#d4d4d4" stroke-width="1.2"/><path d="M13.5 12L19 17.5" stroke="#d4d4d4" stroke-width="1.6"/></svg>
<svg class="a" style="left:51px;top:330px;" width="25" height="21" viewBox="0 0 25 21"><path d="M18.5 10.5A6.5 6.5 0 1 1 15.5 5" fill="none" stroke="#d4d4d4" stroke-width="1.7"/><path d="M13.5 3L19.5 2.5L18.5 8.5Z" fill="#d4d4d4"/></svg>
<svg class="a" style="left:76px;top:330px;" width="25" height="21" viewBox="0 0 25 21"><path d="M5 9Q12 3.5 19.5 8M20 12Q13 17.5 5.5 13" fill="none" stroke="#d4d4d4" stroke-width="1.6"/><path d="M16.5 5L21.5 4.5L21 9.5Z" fill="#d4d4d4"/><path d="M8.5 16L3.5 16.5L4 11.5Z" fill="#d4d4d4"/></svg>
<svg class="a" style="left:9px;top:79px;" width="20" height="18" viewBox="0 0 20 18"><rect x="5.4525" y="7.295" width="9.095" height="3.91" fill="#d4d4d4"/><rect x="2.6857499999999996" y="7.635" width="5.27" height="3.2300000000000004" fill="#d4d4d4"/><circle cx="4.135" cy="7.635" r="2.635" fill="#d4d4d4"/><circle cx="4.135" cy="10.865" r="2.635" fill="#d4d4d4"/><rect x="14.415750000000001" y="7.635" width="2.8985" height="3.2300000000000004" fill="#d4d4d4"/><rect x="12.044250000000002" y="7.635" width="5.27" height="3.2300000000000004" fill="#d4d4d4"/><circle cx="15.865" cy="7.635" r="2.635" fill="#d4d4d4"/><circle cx="15.865" cy="10.865" r="2.635" fill="#d4d4d4"/><rect x="5.4525" y="8.395" width="9.095" height="1.71" fill="#333"/><rect x="3.29075" y="7.635" width="4.06" height="3.2300000000000004" fill="#333"/><circle cx="4.135" cy="7.635" r="1.5349999999999997" fill="#333"/><circle cx="4.135" cy="10.865" r="1.5349999999999997" fill="#333"/><rect x="15.02075" y="7.635" width="1.6885" height="3.2300000000000004" fill="#333"/><rect x="12.64925" y="7.635" width="4.06" height="3.2300000000000004" fill="#333"/><circle cx="15.865" cy="7.635" r="1.5349999999999997" fill="#333"/><circle cx="15.865" cy="10.865" r="1.5349999999999997" fill="#333"/><path d="M7 3.5L9.5 1L12 3.5Z" fill="#6cb4aa"/><path d="M7 14.5L9.5 17L12 14.5Z" fill="#6cb4aa"/></svg>
<div class="a" style="left:1889px;top:77px;width:22px;height:22px;background:#1e1e1e;border-radius:4px"></div>
<svg class="a" style="left:1889px;top:77px;" width="22" height="22" viewBox="0 0 22 22"><path d="M3 5.5Q7 4 10.5 5.5V16Q7 14.5 3 16Z" fill="#d4d4d4"/><path d="M11.5 5.5Q15 4 19 5.5V16Q15 14.5 11.5 16Z" fill="#d4d4d4"/><path d="M2.5 17.5H19.5" stroke="#d4d4d4" stroke-width="1"/></svg>
<svg class="a" style="left:0px;top:0px;pointer-events:none;clip-path:inset(108px 412px 204px 104px)" width="1920" height="1080" viewBox="0 0 1920 1080"><path d="M802.3,421.9 C803.7,421.8 806.7,426.9 807.9,427.9 C809.1,428.9 808.8,429.1 811.0,429.3 C813.2,429.5 821.8,429.6 824.3,429.3 C826.8,429.0 828.2,428.3 829.8,427.4 C831.4,426.5 834.6,422.5 836.3,422.8 C838.0,423.1 838.9,427.0 842.8,429.3 C846.7,431.6 861.6,438.2 865.9,440.4 C870.2,442.6 872.9,444.0 875.2,445.9 C877.5,447.8 881.9,451.8 883.5,454.3 C885.1,456.8 886.5,461.6 887.2,464.4 C887.9,467.2 888.7,472.1 889.1,475.6 C889.5,479.1 889.4,486.7 890.0,490.4 C890.6,494.1 892.8,500.0 893.7,503.3 C894.6,506.6 896.3,512.0 897.0,515.0 C897.7,518.0 898.5,523.3 899.3,525.7 C900.1,528.1 902.4,530.3 903.0,533.1 C903.6,535.9 903.5,542.7 903.9,547.0 C904.3,551.3 905.3,560.7 905.7,565.6 C906.1,570.5 906.4,579.1 906.7,584.0 C907.0,588.9 908.0,599.7 907.6,602.6 C907.2,605.5 905.4,605.4 903.9,605.4 C902.4,605.4 898.0,603.6 896.5,602.6 C895.0,601.6 894.3,601.0 892.8,598.0 C891.3,595.0 887.4,585.2 885.4,580.4 C883.4,575.6 879.7,566.4 878.0,561.9 C876.3,557.4 873.8,552.3 872.4,547.0 C871.0,541.7 868.3,526.7 867.5,522.0 C866.7,517.3 866.8,515.1 866.5,512.0 C866.2,508.9 865.3,502.5 865.0,499.0 C864.7,495.5 864.4,486.7 864.1,486.0 C863.8,485.3 863.4,491.1 863.1,494.0 C862.8,496.9 862.4,504.0 861.5,508.0 C860.6,512.0 857.3,519.3 856.7,523.9 C856.1,528.5 856.2,538.5 856.7,542.4 C857.2,546.3 859.9,549.9 860.4,553.5 C860.9,557.1 860.3,566.5 860.4,569.3 C860.5,572.1 860.6,571.6 861.3,574.8 C862.0,578.0 865.1,589.9 865.9,593.3 C866.7,596.7 866.6,596.9 867.2,600.0 C867.8,603.1 870.0,612.3 870.6,616.7 C871.2,621.1 871.6,628.9 871.7,633.3 C871.8,637.7 872.0,645.5 871.7,650.0 C871.4,654.5 870.0,662.3 869.4,666.7 C868.8,671.1 867.6,678.9 867.2,683.3 C866.8,687.7 866.0,696.2 866.1,700.0 C866.2,703.8 867.3,706.2 868.3,712.0 C869.3,717.8 873.3,736.2 873.9,743.3 C874.5,750.4 873.3,760.4 872.8,765.6 C872.3,770.8 870.5,777.8 870.0,782.2 C869.5,786.6 869.3,794.4 869.4,798.9 C869.5,803.4 871.3,812.9 870.6,815.6 C869.9,818.3 865.8,819.3 863.9,819.4 C862.0,819.5 857.7,818.2 856.1,816.7 C854.5,815.2 852.3,810.5 851.7,807.8 C851.1,805.1 852.4,800.8 851.7,796.7 C851.0,792.6 847.6,782.0 846.1,776.7 C844.6,771.4 841.5,761.9 840.6,756.7 C839.7,751.5 839.4,742.7 839.4,737.8 C839.4,732.9 840.8,724.5 840.5,720.0 C840.2,715.5 837.9,708.9 837.0,704.0 C836.1,699.1 834.6,688.3 833.9,683.3 C833.2,678.3 832.7,671.6 831.7,666.7 C830.7,661.8 827.2,651.2 826.1,646.7 C825.0,642.2 823.7,637.6 823.3,633.3 C822.9,629.0 824.4,616.9 823.3,614.4 C822.2,611.9 816.0,612.6 815.0,614.4 C814.0,616.2 815.9,624.1 815.6,627.8 C815.3,631.5 813.9,638.5 812.8,642.2 C811.7,645.9 808.4,652.0 807.2,655.6 C806.0,659.2 804.5,664.5 803.9,668.9 C803.3,673.3 803.4,684.8 802.8,688.9 C802.2,693.0 800.2,696.9 799.4,700.0 C798.6,703.1 796.9,708.4 796.5,712.0 C796.1,715.6 795.9,722.5 796.1,726.7 C796.3,730.9 797.8,739.2 797.8,743.3 C797.8,747.4 796.9,753.9 796.1,757.8 C795.3,761.7 792.9,768.2 791.7,772.2 C790.5,776.2 787.9,784.2 787.2,787.8 C786.5,791.4 786.2,795.9 786.1,798.9 C786.0,801.9 787.6,807.6 786.7,810.0 C785.8,812.4 781.3,815.6 779.4,816.7 C777.5,817.8 774.6,818.3 772.8,818.3 C771.0,818.3 766.8,818.1 766.1,816.7 C765.4,815.3 767.1,810.9 767.2,807.8 C767.3,804.7 766.8,798.2 766.7,793.3 C766.6,788.4 766.6,776.3 766.1,771.1 C765.6,765.9 763.6,758.8 763.3,754.4 C763.0,750.0 763.4,742.2 763.9,737.8 C764.4,733.4 766.5,724.7 767.2,721.1 C767.9,717.5 768.9,714.7 769.4,711.1 C769.9,707.5 770.7,698.8 770.6,694.4 C770.5,690.0 768.9,683.0 768.3,677.8 C767.7,672.6 766.3,663.0 766.1,655.6 C765.9,648.2 766.3,629.6 766.7,622.2 C767.1,614.8 768.8,603.9 769.4,600.0 C770.0,596.1 770.6,596.4 771.3,593.3 C772.0,590.2 774.3,580.4 775.0,576.7 C775.7,573.0 776.0,568.9 776.4,565.6 C776.8,562.3 777.2,554.8 777.8,551.7 C778.4,548.6 780.1,545.0 780.6,542.4 C781.1,539.8 781.4,535.4 781.3,532.0 C781.2,528.6 780.6,520.6 779.8,517.0 C779.0,513.4 776.2,507.8 775.5,505.0 C774.8,502.2 774.7,498.4 774.6,496.0 C774.5,493.6 774.6,488.2 774.5,487.0 C774.4,485.8 773.6,485.8 773.5,487.0 C773.4,488.2 773.7,493.7 773.8,496.0 C773.9,498.3 775.0,501.2 774.3,504.0 C773.6,506.8 769.7,513.3 768.7,517.0 C767.7,520.7 767.0,528.2 766.5,532.0 C766.0,535.8 765.4,541.7 764.8,545.2 C764.2,548.7 763.6,554.2 762.0,558.1 C760.4,562.0 755.0,570.1 752.8,574.8 C750.6,579.5 747.1,589.6 745.4,593.3 C743.7,597.0 741.4,601.0 739.8,602.6 C738.2,604.2 734.6,605.0 733.3,605.0 C732.0,605.0 730.4,606.6 730.1,602.6 C729.8,598.6 730.7,581.0 731.0,574.8 C731.3,568.6 732.0,561.0 732.4,556.3 C732.8,551.6 733.9,543.1 734.3,539.6 C734.7,536.1 734.6,532.3 735.2,530.4 C735.8,528.5 738.0,528.4 738.9,525.7 C739.8,523.0 741.2,513.0 741.7,510.0 C742.2,507.0 741.9,506.0 742.6,503.3 C743.3,500.6 745.9,493.6 746.8,489.4 C747.7,485.2 748.8,475.6 749.5,471.9 C750.2,468.2 751.1,464.5 751.9,461.7 C752.7,458.9 754.3,453.0 755.6,450.6 C756.9,448.2 759.9,445.3 762.0,444.0 C764.1,442.7 766.6,442.8 771.3,440.8 C776.0,438.8 793.1,431.3 797.2,428.8 C801.3,426.3 800.9,422.0 802.3,421.9Z" fill="#c4805a"/><path d="M751.9,461.7 C752.5,459.9 753.9,453.6 755.6,450.6 C757.3,447.7 759.4,445.6 762.0,444.0 C764.6,442.4 765.4,443.3 771.3,440.8 C777.2,438.3 792.0,432.0 797.2,428.8 C802.4,425.6 800.5,422.0 802.3,421.9 C804.1,421.8 806.4,426.7 807.9,427.9 C809.4,429.1 810.5,429.1 811.0,429.3" fill="none" stroke="#140c06" stroke-width="1.02" stroke-dasharray="2 1.3"/><path d="M824.3,429.3 C825.2,429.0 827.8,428.5 829.8,427.4 C831.8,426.3 834.1,422.5 836.3,422.8 C838.5,423.1 837.9,426.4 842.8,429.3 C847.7,432.2 860.5,437.6 865.9,440.4 C871.3,443.2 872.3,443.6 875.2,445.9 C878.1,448.2 882.1,452.9 883.5,454.3" fill="none" stroke="#140c06" stroke-width="1.02" stroke-dasharray="2 1.3"/><path d="M803.0,430.5 C802.0,431.4 799.8,434.3 797.0,436.0 C794.2,437.7 787.8,439.8 786.0,440.5" fill="none" stroke="#7a4e33" stroke-width="2.76" stroke-linecap="round"/><path d="M803.7,432.0 C802.6,433.0 800.1,436.3 797.0,438.0 C793.9,439.7 787.2,441.3 785.2,442.0" fill="none" stroke="#140c06" stroke-width="1.10" stroke-dasharray="2 1.3"/><path d="M836.0,430.5 C837.0,431.4 839.0,434.3 842.0,436.0 C845.0,437.7 852.0,439.8 854.0,440.5" fill="none" stroke="#7a4e33" stroke-width="2.76" stroke-linecap="round"/><path d="M835.4,432.0 C837.0,433.0 841.0,436.3 845.0,438.0 C849.0,439.7 857.0,441.3 859.4,442.0" fill="none" stroke="#140c06" stroke-width="1.10" stroke-dasharray="2 1.3"/><path d="M812.0,430.0 C812.2,431.2 812.7,435.0 813.0,437.0 C813.3,439.0 813.8,441.2 814.0,442.0" fill="none" stroke="#140c06" stroke-width="0.94" stroke-dasharray="2 1.3"/><path d="M826.0,430.0 C826.0,431.2 825.7,435.2 826.0,437.0 C826.3,438.8 827.7,440.3 828.0,441.0" fill="none" stroke="#140c06" stroke-width="0.94" stroke-dasharray="2 1.3"/><path d="M815.5,452.0 L818.5,472.0 L821.5,452.0 L818.5,447.0Z" fill="#8a5838"/><path d="M789.0,443.5 C791.3,443.4 798.4,442.6 803.0,443.0 C807.6,443.4 814.4,445.5 816.7,446.0" fill="none" stroke="#7a4e33" stroke-width="2.53" stroke-linecap="round"/><path d="M788.9,444.5 C791.2,444.5 798.4,444.0 803.0,444.5 C807.6,445.0 814.4,447.0 816.7,447.5" fill="none" stroke="#140c06" stroke-width="1.10" stroke-dasharray="2 1.3"/><path d="M821.5,447.5 C823.5,446.8 829.2,444.1 833.5,443.5 C837.8,442.9 845.1,443.9 847.4,444.0" fill="none" stroke="#7a4e33" stroke-width="2.53" stroke-linecap="round"/><path d="M821.5,448.7 C823.5,448.1 829.2,445.5 833.5,445.0 C837.8,444.5 845.1,445.4 847.4,445.5" fill="none" stroke="#140c06" stroke-width="1.10" stroke-dasharray="2 1.3"/><path d="M787.0,446.0 C785.3,447.8 779.7,453.0 777.0,457.0 C774.3,461.0 772.0,467.8 771.0,470.0" fill="none" stroke="#7a4e33" stroke-width="3.45" stroke-linecap="round"/><path d="M785.0,445.0 C783.3,446.8 777.8,451.8 775.0,456.0 C772.2,460.2 769.6,467.7 768.5,470.0" fill="none" stroke="#140c06" stroke-width="1.10" stroke-dasharray="2 1.3"/><path d="M851.0,446.0 C852.5,447.7 857.5,452.7 860.0,456.0 C862.5,459.3 865.0,464.3 866.0,466.0" fill="none" stroke="#7a4e33" stroke-width="2.76" stroke-linecap="round"/><path d="M852.0,445.0 C853.5,446.7 858.5,451.4 861.0,455.0 C863.5,458.6 865.9,464.4 866.9,466.3" fill="none" stroke="#140c06" stroke-width="1.10" stroke-dasharray="2 1.3"/><path d="M768.5,446.4 C767.0,447.9 760.8,454.1 759.3,455.6" fill="none" stroke="#140c06" stroke-width="1.10" stroke-dasharray="2 1.3"/><path d="M868.7,445.0 C870.2,446.7 876.5,453.5 878.0,455.2" fill="none" stroke="#140c06" stroke-width="1.10" stroke-dasharray="2 1.3"/><path d="M777.5,477.0 C779.6,477.9 785.4,482.0 790.0,482.5 C794.6,483.0 800.5,482.2 805.0,480.0 C809.5,477.8 815.0,470.8 817.0,469.0" fill="none" stroke="#7a4e33" stroke-width="3.91" stroke-linecap="round"/><path d="M776.9,479.0 C779.0,480.1 785.1,484.8 789.8,485.5 C794.5,486.2 800.4,485.4 805.0,483.0 C809.6,480.6 815.5,473.0 817.6,471.0" fill="none" stroke="#140c06" stroke-width="1.19" stroke-dasharray="2 1.3"/><path d="M821.0,470.0 C822.7,471.7 827.3,477.8 831.0,480.0 C834.7,482.2 838.2,483.7 843.0,483.0 C847.8,482.3 857.2,477.2 860.0,476.0" fill="none" stroke="#7a4e33" stroke-width="3.91" stroke-linecap="round"/><path d="M820.6,472.0 C822.2,473.8 826.3,480.2 830.0,482.5 C833.7,484.8 837.7,486.2 842.8,485.5 C847.9,484.8 857.5,479.2 860.4,478.0" fill="none" stroke="#140c06" stroke-width="1.19" stroke-dasharray="2 1.3"/><path d="M766.0,478.0 C764.0,479.8 757.0,484.8 754.0,489.0 C751.0,493.2 749.3,497.8 748.0,503.0 C746.7,508.2 746.3,517.2 746.0,520.0" fill="none" stroke="#7a4e33" stroke-width="2.99" stroke-linecap="round"/><path d="M765.7,477.4 C763.6,479.4 756.0,485.1 752.8,489.4 C749.6,493.7 747.7,498.2 746.3,503.3 C744.9,508.4 744.7,517.2 744.4,520.0" fill="none" stroke="#140c06" stroke-width="1.10" stroke-dasharray="2 1.3"/><path d="M870.0,478.0 C871.7,479.2 877.3,482.5 880.0,485.0 C882.7,487.5 884.7,488.5 886.0,493.0 C887.3,497.5 887.7,508.8 888.0,512.0" fill="none" stroke="#7a4e33" stroke-width="2.99" stroke-linecap="round"/><path d="M870.6,478.3 C872.2,479.2 877.2,481.7 880.0,484.0 C882.8,486.3 885.7,487.4 887.2,492.2 C888.7,497.0 888.7,509.2 889.0,512.6" fill="none" stroke="#140c06" stroke-width="1.10" stroke-dasharray="2 1.3"/><path d="M774.5,492.0 C774.7,494.2 775.1,500.3 775.5,505.0 C775.9,509.7 776.8,517.5 777.0,520.0" fill="none" stroke="#140c06" stroke-width="1.02" stroke-dasharray="2 1.3"/><path d="M864.0,492.0 C863.8,494.2 863.0,500.3 862.5,505.0 C862.0,509.7 861.2,517.5 861.0,520.0" fill="none" stroke="#140c06" stroke-width="1.02" stroke-dasharray="2 1.3"/><path d="M774.0,485.0 L784.0,493.0 L788.0,499.0 L780.0,497.0 L787.0,507.0 L780.0,506.0 L789.0,516.0 L781.0,516.0 L782.0,527.0 L779.0,533.0 L777.5,515.0 L776.0,500.0Z" fill="#7a4e33"/><path d="M864.0,485.0 L854.0,493.0 L852.0,497.0 L859.0,497.0 L853.0,504.5 L859.0,505.0 L852.0,514.0 L858.0,514.0 L857.0,527.0 L860.0,533.0 L861.5,515.0 L862.5,500.0Z" fill="#7a4e33"/><path d="M775.0,487.0 C775.5,488.3 775.8,493.0 778.0,495.0 C780.2,497.0 786.3,498.3 788.0,499.0" fill="none" stroke="#140c06" stroke-width="0.94" stroke-dasharray="2 1.3"/><path d="M778.0,507.0 C779.5,507.0 785.5,507.0 787.0,507.0" fill="none" stroke="#140c06" stroke-width="0.94" stroke-dasharray="2 1.3"/><path d="M863.0,487.0 C862.5,488.3 861.8,493.3 860.0,495.0 C858.2,496.7 853.3,496.7 852.0,497.0" fill="none" stroke="#140c06" stroke-width="0.94" stroke-dasharray="2 1.3"/><path d="M860.0,505.0 C858.8,504.9 854.2,504.6 853.0,504.5" fill="none" stroke="#140c06" stroke-width="0.94" stroke-dasharray="2 1.3"/><path d="M797.7,503.0 C798.6,501.3 801.0,495.2 803.0,493.0 C805.0,490.8 807.5,490.7 810.0,490.0 C812.5,489.3 816.7,489.2 818.0,489.0" fill="none" stroke="#140c06" stroke-width="1.10" stroke-dasharray="2 1.3"/><path d="M818.0,489.0 C819.7,489.2 825.2,489.3 828.0,490.0 C830.8,490.7 833.2,490.8 835.0,493.0 C836.8,495.2 838.0,501.3 838.6,503.0" fill="none" stroke="#140c06" stroke-width="1.10" stroke-dasharray="2 1.3"/><path d="M797.7,503.0 C797.6,505.8 796.5,514.3 797.0,520.0 C797.5,525.7 799.9,534.2 800.5,537.0" fill="none" stroke="#140c06" stroke-width="1.10" stroke-dasharray="2 1.3"/><path d="M838.6,503.0 C838.7,505.8 839.3,514.3 839.0,520.0 C838.7,525.7 837.3,534.2 837.0,537.0" fill="none" stroke="#140c06" stroke-width="1.10" stroke-dasharray="2 1.3"/><path d="M798.0,510.0 C799.7,509.5 804.7,506.8 808.0,507.0 C811.3,507.2 816.3,510.3 818.0,511.0" fill="none" stroke="#7a4e33" stroke-width="2.30" stroke-linecap="round"/><path d="M798.0,508.0 C799.7,507.5 804.7,504.8 808.0,505.0 C811.3,505.2 816.3,508.8 818.0,509.5" fill="none" stroke="#140c06" stroke-width="1.02" stroke-dasharray="2 1.3"/><path d="M820.0,511.0 C821.7,510.3 826.8,507.2 830.0,507.0 C833.2,506.8 837.5,509.5 839.0,510.0" fill="none" stroke="#7a4e33" stroke-width="2.30" stroke-linecap="round"/><path d="M820.0,509.5 C821.7,508.8 826.8,505.2 830.0,505.0 C833.2,504.8 837.5,507.5 839.0,508.0" fill="none" stroke="#140c06" stroke-width="1.02" stroke-dasharray="2 1.3"/><path d="M799.0,524.0 C800.5,523.5 804.8,520.8 808.0,521.0 C811.2,521.2 816.3,524.3 818.0,525.0" fill="none" stroke="#7a4e33" stroke-width="2.30" stroke-linecap="round"/><path d="M799.0,522.0 C800.5,521.6 804.8,519.2 808.0,519.5 C811.2,519.8 816.3,522.8 818.0,523.5" fill="none" stroke="#140c06" stroke-width="1.02" stroke-dasharray="2 1.3"/><path d="M820.0,525.0 C821.5,524.3 826.0,521.2 829.0,521.0 C832.0,520.8 836.5,523.5 838.0,524.0" fill="none" stroke="#7a4e33" stroke-width="2.30" stroke-linecap="round"/><path d="M820.0,523.5 C821.5,522.8 826.0,519.8 829.0,519.5 C832.0,519.2 836.5,521.6 838.0,522.0" fill="none" stroke="#140c06" stroke-width="1.02" stroke-dasharray="2 1.3"/><path d="M801.0,538.0 C802.3,538.3 806.2,540.3 809.0,540.0 C811.8,539.7 816.5,536.7 818.0,536.0" fill="none" stroke="#7a4e33" stroke-width="2.30" stroke-linecap="round"/><path d="M820.0,536.0 C821.5,536.7 826.2,539.7 829.0,540.0 C831.8,540.3 835.7,538.3 837.0,538.0" fill="none" stroke="#7a4e33" stroke-width="2.30" stroke-linecap="round"/><path d="M818.5,490.0 C818.5,494.2 818.5,505.8 818.5,515.0 C818.5,524.2 818.5,540.0 818.5,545.0" fill="none" stroke="#140c06" stroke-width="0.94" stroke-dasharray="2.5 2"/><path d="M781.0,545.0 C782.5,546.3 787.2,549.7 790.0,553.0 C792.8,556.3 796.7,563.0 798.0,565.0" fill="none" stroke="#7a4e33" stroke-width="2.99" stroke-linecap="round"/><path d="M800.9,538.7 C800.0,540.6 795.7,545.2 795.4,549.8 C795.1,554.4 798.4,563.7 799.0,566.5" fill="none" stroke="#140c06" stroke-width="1.02" stroke-dasharray="2 1.3"/><path d="M857.0,545.0 C855.5,546.3 850.7,549.7 848.0,553.0 C845.3,556.3 842.2,563.0 841.0,565.0" fill="none" stroke="#7a4e33" stroke-width="2.99" stroke-linecap="round"/><path d="M837.0,538.7 C837.9,540.6 842.2,545.2 842.5,549.8 C842.8,554.4 839.6,563.7 839.0,566.5" fill="none" stroke="#140c06" stroke-width="1.02" stroke-dasharray="2 1.3"/><path d="M780.6,544.3 C782.0,545.6 786.3,548.4 789.0,552.0 C791.7,555.6 795.7,563.7 797.0,566.0" fill="none" stroke="#140c06" stroke-width="0.94" stroke-dasharray="2 1.3"/><path d="M857.0,544.3 C855.7,545.6 851.7,548.4 849.0,552.0 C846.3,555.6 842.3,563.7 841.0,566.0" fill="none" stroke="#140c06" stroke-width="0.94" stroke-dasharray="2 1.3"/><path d="M774.5,488.0 C774.7,490.5 775.3,499.0 775.8,503.0 C776.3,507.0 776.8,508.0 777.5,512.0 C778.2,516.0 779.8,522.0 780.2,527.0 C780.7,532.0 780.2,539.5 780.2,542.0" fill="none" stroke="#140c06" stroke-width="1.02" stroke-dasharray="2 1.3"/><path d="M863.6,488.0 C863.4,490.5 862.8,499.7 862.3,503.0 C861.8,506.3 861.6,504.5 860.8,508.0 C859.9,511.5 857.8,518.3 857.2,524.0 C856.6,529.7 857.2,539.0 857.2,542.0" fill="none" stroke="#140c06" stroke-width="1.02" stroke-dasharray="2 1.3"/><path d="M773.0,490.0 C772.7,491.7 771.8,496.2 771.0,500.0 C770.2,503.8 769.3,507.9 768.5,512.6 C767.7,517.3 766.4,525.4 766.0,528.0" fill="none" stroke="#140c06" stroke-width="0.94" stroke-dasharray="2 1.3"/><path d="M865.5,492.0 C865.7,494.2 866.2,500.3 866.5,505.0 C866.8,509.7 867.3,517.5 867.5,520.0" fill="none" stroke="#140c06" stroke-width="0.94" stroke-dasharray="2 1.3"/><path d="M736.1,545.2 C737.1,548.0 740.0,556.8 742.0,562.0 C744.0,567.2 747.1,574.2 748.1,576.7" fill="none" stroke="#140c06" stroke-width="1.10" stroke-dasharray="2 1.3"/><path d="M753.0,543.0 C752.9,545.2 752.7,551.7 752.5,556.0 C752.3,560.3 752.1,566.8 752.0,569.0" fill="none" stroke="#7a4e33" stroke-width="2.30" stroke-linecap="round"/><path d="M752.8,542.4 C752.7,544.5 752.1,550.5 752.0,555.0 C751.9,559.5 751.9,566.9 751.9,569.3" fill="none" stroke="#140c06" stroke-width="1.10" stroke-dasharray="2 1.3"/><path d="M754.6,531.3 C755.8,529.8 759.7,525.4 762.0,522.0 C764.3,518.6 767.1,515.0 768.5,511.0 C769.9,507.0 770.3,502.8 770.5,498.0 C770.7,493.2 769.7,484.7 769.5,482.0" fill="none" stroke="#140c06" stroke-width="1.10" stroke-dasharray="2 1.3"/><path d="M743.0,520.0 C743.0,521.7 742.7,527.0 743.0,530.0 C743.3,533.0 744.7,536.7 745.0,538.0" fill="none" stroke="#7a4e33" stroke-width="2.53" stroke-linecap="round"/><path d="M868.2,510.0 C869.2,511.8 872.1,517.8 874.0,521.0 C875.9,524.2 878.8,528.0 879.8,529.4" fill="none" stroke="#140c06" stroke-width="1.10" stroke-dasharray="2 1.3"/><path d="M889.5,528.0 C888.9,530.3 886.8,535.8 886.0,542.0 C885.2,548.2 885.2,561.2 885.0,565.0" fill="none" stroke="#7a4e33" stroke-width="2.53" stroke-linecap="round"/><path d="M890.0,528.5 C889.2,530.8 886.3,536.2 885.4,542.4 C884.5,548.6 884.6,561.7 884.4,565.6" fill="none" stroke="#140c06" stroke-width="1.10" stroke-dasharray="2 1.3"/><path d="M900.2,537.8 C900.1,540.6 900.5,549.6 899.3,554.4 C898.1,559.2 893.9,564.5 892.8,566.5" fill="none" stroke="#140c06" stroke-width="1.10" stroke-dasharray="2 1.3"/><path d="M899.0,540.0 C898.8,542.7 899.0,551.7 898.0,556.0 C897.0,560.3 893.8,564.3 893.0,566.0" fill="none" stroke="#7a4e33" stroke-width="2.07" stroke-linecap="round"/><path d="M771.0,604.0 C770.7,608.3 769.3,620.7 769.0,630.0 C768.7,639.3 768.5,650.0 769.0,660.0 C769.5,670.0 771.5,685.0 772.0,690.0" fill="none" stroke="#7a4e33" stroke-width="2.76" stroke-linecap="round"/><path d="M769.0,602.0 C768.7,606.7 767.3,620.3 767.0,630.0 C766.7,639.7 766.5,650.0 767.0,660.0 C767.5,670.0 769.5,685.0 770.0,690.0" fill="none" stroke="#140c06" stroke-width="1.10" stroke-dasharray="2 1.3"/><path d="M793.0,603.0 C793.8,606.8 796.7,618.0 798.0,626.0 C799.3,634.0 800.5,646.8 801.0,651.0" fill="none" stroke="#7a4e33" stroke-width="2.53" stroke-linecap="round"/><path d="M791.7,600.0 C792.6,604.2 795.5,616.3 797.0,625.0 C798.5,633.7 800.0,647.7 800.6,652.2" fill="none" stroke="#140c06" stroke-width="1.10" stroke-dasharray="2 1.3"/><path d="M775.0,658.0 C776.0,660.2 778.8,669.8 781.0,671.0 C783.2,672.2 786.8,666.0 788.0,665.0" fill="none" stroke="#7a4e33" stroke-width="2.30" stroke-linecap="round"/><path d="M773.9,655.6 C775.0,658.4 778.2,670.5 780.6,672.2 C783.0,673.9 787.0,666.7 788.3,665.6" fill="none" stroke="#140c06" stroke-width="1.10" stroke-dasharray="2 1.3"/><path d="M769.4,676.7 C770.2,678.2 772.3,683.6 774.0,686.0 C775.7,688.4 778.5,690.2 779.4,691.1" fill="none" stroke="#140c06" stroke-width="1.10" stroke-dasharray="2 1.3"/><path d="M803.0,662.0 C802.5,666.7 801.3,681.8 800.0,690.0 C798.7,698.2 795.8,707.5 795.0,711.0" fill="none" stroke="#7a4e33" stroke-width="2.99" stroke-linecap="round"/><path d="M805.0,662.0 C804.5,666.7 803.3,681.8 802.0,690.0 C800.7,698.2 797.8,707.5 797.0,711.0" fill="none" stroke="#140c06" stroke-width="1.02" stroke-dasharray="2 1.3"/><path d="M769.0,723.0 C768.6,726.7 766.7,737.2 766.5,745.0 C766.3,752.8 767.8,765.8 768.0,770.0" fill="none" stroke="#7a4e33" stroke-width="2.53" stroke-linecap="round"/><path d="M767.0,722.0 C766.6,725.8 764.7,737.0 764.5,745.0 C764.3,753.0 765.8,765.8 766.0,770.0" fill="none" stroke="#140c06" stroke-width="1.10" stroke-dasharray="2 1.3"/><path d="M795.0,730.0 C794.8,734.5 795.2,747.8 794.0,757.0 C792.8,766.2 789.2,777.8 788.0,785.0 C786.8,792.2 787.2,797.5 787.0,800.0" fill="none" stroke="#7a4e33" stroke-width="2.76" stroke-linecap="round"/><path d="M797.0,728.0 C796.8,732.8 797.3,747.0 796.0,757.0 C794.7,767.0 790.3,780.0 789.0,788.0 C787.7,796.0 788.2,802.2 788.0,805.0" fill="none" stroke="#140c06" stroke-width="1.10" stroke-dasharray="2 1.3"/><path d="M835.0,644.0 C834.8,646.7 833.8,657.3 833.5,660.0" fill="none" stroke="#140c06" stroke-width="1.02" stroke-dasharray="2 1.3"/><path d="M863.5,642.0 C863.2,644.5 864.2,650.7 862.0,657.0 C859.8,663.3 852.0,676.2 850.0,680.0" fill="none" stroke="#140c06" stroke-width="1.10" stroke-dasharray="2 1.3"/><path d="M835.0,685.0 C835.8,685.5 838.2,687.7 840.0,688.0 C841.8,688.3 845.0,687.2 846.0,687.0" fill="none" stroke="#140c06" stroke-width="0.94" stroke-dasharray="2 1.3"/><path d="M837.0,691.0 C838.0,691.5 841.2,693.8 843.0,694.0 C844.8,694.2 847.2,692.3 848.0,692.0" fill="none" stroke="#140c06" stroke-width="0.94" stroke-dasharray="2 1.3"/><path d="M842.0,702.0 C843.7,702.8 848.7,707.3 852.0,707.0 C855.3,706.7 860.3,701.2 862.0,700.0" fill="none" stroke="#7a4e33" stroke-width="2.30" stroke-linecap="round"/><path d="M842.0,700.0 C843.7,700.8 848.7,705.3 852.0,705.0 C855.3,704.7 860.3,699.2 862.0,698.0" fill="none" stroke="#140c06" stroke-width="0.94" stroke-dasharray="2 1.3"/><path d="M835.0,697.0 L840.0,700.0 L844.0,712.0 L842.0,719.0 L838.0,708.0Z" fill="#7a4e33"/><path d="M842.0,716.0 C842.7,719.7 845.3,734.3 846.0,738.0" fill="none" stroke="#7a4e33" stroke-width="2.76" stroke-linecap="round"/><path d="M843.0,716.0 C843.7,719.7 846.3,734.3 847.0,738.0" fill="none" stroke="#140c06" stroke-width="1.02" stroke-dasharray="2 1.3"/><path d="M851.0,742.0 C851.5,746.7 853.3,762.8 854.0,770.0 C854.7,777.2 854.8,782.5 855.0,785.0" fill="none" stroke="#140c06" stroke-width="1.02" stroke-dasharray="2 1.3"/><path d="M850.0,780.0 C850.3,782.5 851.7,792.5 852.0,795.0" fill="none" stroke="#7a4e33" stroke-width="2.76" stroke-linecap="round"/><path d="M868.0,724.0 C868.7,727.5 871.7,738.2 872.0,745.0 C872.3,751.8 870.3,761.7 870.0,765.0" fill="none" stroke="#7a4e33" stroke-width="2.76" stroke-linecap="round"/><path d="M866.0,722.0 C866.7,725.8 869.5,738.0 870.0,745.0 C870.5,752.0 869.2,760.8 869.0,764.0" fill="none" stroke="#140c06" stroke-width="1.02" stroke-dasharray="2 1.3"/><path d="M776.4,559.0 L799.0,569.3 L818.0,573.0 L842.8,566.5 L860.4,559.0 L860.4,571.1 L855.0,577.0 L842.8,588.0 L828.9,603.5 L823.7,614.0 L819.0,615.5 L814.4,614.0 L808.3,602.6 L795.0,587.0 L789.8,582.2 L776.4,574.8Z" fill="#4d3a06"/><path d="M776.0,577.0 C777.5,578.0 782.7,580.8 785.0,583.0 C787.3,585.2 789.2,588.8 790.0,590.0" fill="none" stroke="#140c06" stroke-width="0.94" stroke-dasharray="2 1.3"/><path d="M777.0,580.0 C778.0,581.0 782.0,585.0 783.0,586.0" fill="none" stroke="#7a4e33" stroke-width="2.07" stroke-linecap="round"/><path d="M818.5,427.4 L815.2,467.9 L818.5,471.9 L821.8,467.9 Z" fill="none" stroke="#2ec0b0" stroke-width="1.1"/><path d="M818.5,471.9 L813.2,533.1 L818.2,537.0 L823.2,533.1 Z" fill="none" stroke="#2ec0b0" stroke-width="1.1"/><path d="M818.5,576.0 L821.3,544.8 L818.2,537.0 L815.3,544.8 Z" fill="none" stroke="#2ec0b0" stroke-width="1.1"/><path d="M818.6,615.0 L822.2,581.1 L818.6,576.5 L815.0,581.1 Z" fill="none" stroke="#2ec0b0" stroke-width="1.1"/><path d="M749.0,531.5 L765.5,464.1 L761.8,455.7 L755.6,462.4 Z" fill="none" stroke="#2ec0b0" stroke-width="1.1"/><path d="M736.5,597.6 L752.7,539.0 L749.0,531.5 L742.8,537.2 Z" fill="none" stroke="#2ec0b0" stroke-width="1.1"/><path d="M886.2,534.4 L870.9,461.6 L863.8,455.0 L861.2,464.3 Z" fill="none" stroke="#2ec0b0" stroke-width="1.1"/><path d="M900.8,603.4 L892.6,540.3 L886.2,534.4 L882.8,542.3 Z" fill="none" stroke="#2ec0b0" stroke-width="1.1"/><path d="M782.6,708.6 L793.8,600.1 L786.0,591.7 L777.8,599.7 Z" fill="none" stroke="#2ec0b0" stroke-width="1.1"/><path d="M774.0,813.0 L790.0,716.6 L782.6,708.6 L774.0,715.3 Z" fill="none" stroke="#2ec0b0" stroke-width="1.1"/><path d="M849.7,697.0 L855.5,598.9 L847.3,591.7 L839.5,599.3 Z" fill="none" stroke="#2ec0b0" stroke-width="1.1"/><path d="M860.4,813.0 L858.4,704.4 L849.7,697.0 L842.5,705.9 Z" fill="none" stroke="#2ec0b0" stroke-width="1.1"/><path d="M821.9,573.1 L827.4,567.1 L937.8,575.2 L828.3,585.2 Z" fill="none" stroke="#f01414" stroke-width="1.3" stroke-linejoin="miter"/><path d="M819,583 V636" stroke="#dcb4b4" stroke-opacity="0.9" stroke-width="1.8"/><path d="M813.5,587 L819,581.5 L824.5,587" fill="none" stroke="#c8a0a0" stroke-width="1.2"/><path d="M790,608.8 H847 M841.3,603.2 L847,608.8 L841.3,614.2" fill="none" stroke="#c49cac" stroke-width="1.2"/></svg>
<div class="a" style="left:0px;top:1040px;width:1920px;height:40px;background:#1c1c1c;"></div>
<svg class="a" style="left:16px;top:1051px;" width="17" height="17" viewBox="0 0 17 17"><path d="M0.5 2.5L7.3 1.6V7.8H0.5Z M8.3 1.4L16.5 0.3V7.8H8.3Z M0.5 8.8H7.3V15L0.5 14.1Z M8.3 8.8H16.5V16.5L8.3 15.3Z" fill="#fff"/></svg>
<div class="a" style="left:48px;top:1040px;width:344px;height:40px;background:#2e2e2e;border:1px solid #4a4a4a;border-bottom:none"></div>
<svg class="a" style="left:58px;top:1050px;" width="20" height="20" viewBox="0 0 20 20"><circle cx="12.3" cy="7.5" r="5.3" fill="none" stroke="#e8e8e8" stroke-width="1.1"/><path d="M8.5 11.5L2.2 17.8" stroke="#e8e8e8" stroke-width="1.2"/></svg>
<div class="t" style="left:88px;top:1050.85px;height:20.5px;line-height:20.5px;font-size:14.5px;color:#e6e6e6;">Type here to search</div>
<svg class="a" style="left:408px;top:1049px;" width="22" height="21" viewBox="0 0 22 21"><path d="M0.5 2.5H7L8.5 4.5H21.5V18.5H0.5Z" fill="#f0c040"/><path d="M0.5 6H21.5V18.5H0.5Z" fill="#ffd860"/><path d="M5 12H17V19H14V15H8V19H5Z" fill="#2f7fd8"/></svg>
<div class="a" style="left:399px;top:1078px;width:40px;height:2px;background:#9a9a9a;"></div>
<svg class="a" style="left:456px;top:1048px;" width="24" height="24" viewBox="0 0 24 24"><circle cx="12" cy="12" r="11" fill="#db4437"/><path d="M12 12L2.5 6.5A11 11 0 0 0 7.5 22Z" fill="#0f9d58"/><path d="M12 12L7.5 22A11 11 0 0 0 23 12Z" fill="#ffcd40"/><path d="M12 12H23A11 11 0 0 0 21.5 6.5H12Z" fill="#db4437"/><circle cx="12" cy="12" r="5" fill="#fff"/><circle cx="12" cy="12" r="4" fill="#4285f4"/></svg>
<svg class="a" style="left:505px;top:1047px;" width="24" height="25" viewBox="0 0 24 25"><path d="M1 1H11L15 5H1Z" fill="#0a4a6a"/><path d="M1 3H14L23 11V24H8L1 17Z" fill="#17b8e0"/><path d="M1 3H14L17 6V12H1Z" fill="#fff" fill-opacity="0.15"/><path d="M6 13H14V9.5L20 15L14 20.5V17H6Z" fill="#fff"/></svg>
<svg class="a" style="left:555px;top:1048px;" width="22" height="24" viewBox="0 0 22 24"><path d="M8.5 1H13.5L19 19H3Z" fill="#f08a00"/><path d="M7.2 7H14.8L15.6 10H6.4Z" fill="#ddd"/><path d="M5.6 13H16.4L17.2 16H4.8Z" fill="#ddd"/><path d="M1 19H21V22.5H1Z" fill="#f07800"/></svg>
<div class="a" style="left:546px;top:1078px;width:40px;height:2px;background:#9a9a9a;"></div>
<svg class="a" style="left:602px;top:1047px;" width="25" height="25" viewBox="0 0 25 25"><circle cx="12.5" cy="12.5" r="10.5" fill="#fff"/><circle cx="12.5" cy="12.5" r="9" fill="#3cc84a"/><path d="M3 23L5 17L9 20Z" fill="#fff"/><path d="M8.5 8Q9.5 6.5 10.5 8L11.3 10Q11.3 11 10.5 11.5Q11.5 14 14 15Q14.5 14.2 15.3 14.2L17.3 15.2Q18 16 16.5 17.3Q14.5 18.5 11 15.5Q7.5 12.3 8.5 8Z" fill="#fff"/></svg>
<svg class="a" style="left:652px;top:1048px;" width="25" height="24" viewBox="0 0 25 24"><path d="M3 3L21 1V16L3 15Z" fill="#c8d0d8"/><path d="M5 4.5L19.5 3V14L5 13.3Z" fill="#fff"/><path d="M6 10L9 10L10.5 6L12.5 12L14 8L16 10H19" fill="none" stroke="#2080d0" stroke-width="1"/><path d="M8 17H17L18 21H7Z" fill="#aab"/><path d="M1 6L3 5V13L1 12Z" fill="#8a8"/></svg>
<svg class="a" style="left:702px;top:1049px;" width="21" height="20" viewBox="0 0 21 20"><rect x="0.8" y="0.8" width="19.4" height="18.4" fill="#2a0606" stroke="#e8251e" stroke-width="1.4"/><path d="M5 5H11V7H7V9.2H10.5V11.2H7V15H5Z M12.5 5H14.5V15H12.5Z" fill="#f0302a"/></svg>
<svg class="a" style="left:751px;top:1049px;" width="21" height="20" viewBox="0 0 21 20"><rect x="0.8" y="0.8" width="19.4" height="18.4" fill="#2a0838" stroke="#d060f0" stroke-width="1.4"/><path d="M4.5 5H8.5Q11 5 11 7.7Q11 10.4 8.5 10.4H6.4V15H4.5ZM6.4 6.7V8.8H8.3Q9.1 8.8 9.1 7.7Q9.1 6.7 8.3 6.7Z M12.2 8H13.9V9.3Q14.6 7.8 16.2 7.9V9.8Q14 9.8 13.9 11.5V15H12.2Z" fill="#e8a0ff"/></svg>
<svg class="a" style="left:799px;top:1047px;" width="25" height="26" viewBox="0 0 25 26"><ellipse cx="12" cy="10" rx="11" ry="6.5" transform="rotate(-20 12 10)" fill="#e04848"/><ellipse cx="12" cy="9.5" rx="9.5" ry="5" transform="rotate(-20 12 9.5)" fill="#f0f0f0"/><path d="M9 3L14 16M15 2L12 16" stroke="#777" stroke-width="1"/><circle cx="11" cy="19" r="2.6" fill="none" stroke="#2a9ae0" stroke-width="1.6"/><circle cx="17" cy="20" r="2.6" fill="none" stroke="#2a9ae0" stroke-width="1.6"/></svg>
<div class="a" style="left:848px;top:1048px;width:24px;height:24px;background:#3a3a3a;border-radius:4px"></div>
<svg class="a" style="left:848px;top:1048px;" width="24" height="24" viewBox="0 0 24 24"><path d="M5 8L8.5 5H15V18H5Z" fill="#ff5a10"/><path d="M15 10L20 7.5V15.5L15 13Z" fill="#fff"/><circle cx="11.8" cy="9" r="1.4" fill="#fff"/><path d="M3 6L6 3.5" stroke="#ccc" stroke-width="1"/></svg>
<svg class="a" style="left:897px;top:1048px;" width="24" height="24" viewBox="0 0 24 24"><circle cx="12" cy="12" r="10.5" fill="#1c0808" stroke="#e22" stroke-width="1.4"/><circle cx="11" cy="12.5" r="5" fill="#e22"/><circle cx="11" cy="12.5" r="2" fill="#1c0808"/><path d="M13 6L18 4.5L17 9.5Z" fill="#e22"/></svg>
<div class="a" style="left:934px;top:1040px;width:48px;height:38px;background:#3c3c3c;"></div>
<div class="a" style="left:934px;top:1078px;width:48px;height:2px;background:#a8a8a8;"></div>
<svg class="a" style="left:946px;top:1049px;" width="23" height="23" viewBox="0 0 23 23"><circle cx="11.5" cy="11.5" r="10.5" fill="#f26422"/><path d="M5.5 15.5V9.5Q5.5 7 7.5 7Q9.5 7 9.5 9.5V15M9.5 9.5Q9.5 7 11.5 7Q13.5 7 13.5 9.5V12" fill="none" stroke="#fff" stroke-width="1.6"/><circle cx="16" cy="15" r="2" fill="#fff"/></svg>
<svg class="a" style="left:996px;top:1049px;" width="22" height="22" viewBox="0 0 22 22"><rect x="0" y="0" width="22" height="22" fill="#2a8ae8"/><path d="M0 15L7 8L15 16L22 12V22H0Z" fill="#1a4f9a"/><path d="M7 22L15 14L22 19V22Z" fill="#2f6fc8"/><circle cx="16" cy="5" r="2.3" fill="#fff"/></svg>
<div class="a" style="left:987px;top:1078px;width:40px;height:2px;background:#9a9a9a;"></div>
<div class="t" style="left:1327px;top:1045.85px;height:17.5px;line-height:17.5px;font-size:11.5px;color:#e8e8e8;">U:</div>
<div class="t" style="left:1327px;top:1058.85px;height:17.5px;line-height:17.5px;font-size:11.5px;color:#e8e8e8;">D:</div>
<div class="t" style="left:1367px;top:1046.1px;height:17px;line-height:17px;font-size:11px;color:#e8e8e8;">0.0 kB/s</div>
<div class="t" style="left:1367px;top:1059.1px;height:17px;line-height:17px;font-size:11px;color:#e8e8e8;">0.0 kB/s</div>
<svg class="a" style="left:1472px;top:1048px;" width="30" height="24" viewBox="0 0 30 24"><ellipse cx="14" cy="12" rx="9" ry="7" fill="#b8d8f0"/><circle cx="9" cy="13" r="5" fill="#c8e0f4"/><circle cx="19" cy="13" r="5" fill="#a8c8e8"/><path d="M5 17H25" stroke="#a8c8e8" stroke-width="3" stroke-linecap="round"/><path d="M11 20L10 23M15 20L14 23" stroke="#4aa8f0" stroke-width="1.2"/></svg>
<div class="t" style="left:1504px;top:1051.5px;height:20.2px;line-height:20.2px;font-size:14.2px;color:#f0f0f0;">88°F</div>
<div class="t" style="left:1540px;top:1051.5px;height:20.2px;line-height:20.2px;font-size:14.2px;color:#f0f0f0;">Light rain</div>
<svg class="a" style="left:1613px;top:1050px;" width="17" height="20" viewBox="0 0 17 20"><path d="M6.5 1H10.5L14.5 15H2.5Z" fill="#f08a00"/><path d="M5.5 5.5H11.5L12.2 8H4.8Z" fill="#ddd"/><path d="M4.2 10H12.8L13.4 12.5H3.6Z" fill="#ddd"/><path d="M1 15H16V18H1Z" fill="#f07800"/></svg>
<svg class="a" style="left:1637px;top:1050px;" width="18" height="20" viewBox="0 0 18 20"><path d="M1 1H9L16 7V18H6L1 13Z" fill="#17b8e0"/><path d="M4 9H10V6.5L14.5 11L10 15.5V13H4Z" fill="#fff"/></svg>
<svg class="a" style="left:1662px;top:1050px;" width="18" height="20" viewBox="0 0 18 20"><path d="M2 16A13 13 0 0 1 15 3M5 16A10 10 0 0 1 15 6M8 16A7 7 0 0 1 15 9M11 16A4 4 0 0 1 15 12" fill="none" stroke="#e8e8e8" stroke-width="1.1"/><circle cx="15" cy="16" r="1.3" fill="#e8e8e8"/></svg>
<svg class="a" style="left:1683px;top:1050px;" width="20" height="20" viewBox="0 0 20 20"><path d="M2 7.5H5.5L10 3.5V16.5L5.5 12.5H2Z" fill="none" stroke="#f0f0f0" stroke-width="1.2"/><path d="M12.5 7Q14 10 12.5 13M15 5Q17.5 10 15 15" fill="none" stroke="#f0f0f0" stroke-width="1.2"/></svg>
<svg class="a" style="left:1709px;top:1049px;" width="20" height="21" viewBox="0 0 20 21"><path d="M9 1L17 4V10Q17 16 9 19Q1 16 1 10V4Z" fill="#f4f4f4"/><path d="M9 1V19Q1 16 1 10V4Z" fill="#222"/><path d="M1 10H17" stroke="#222" stroke-width="0"/><circle cx="14" cy="15" r="4.5" fill="#1a8a3a"/><path d="M11.8 15L13.5 16.7L16.3 13.5" fill="none" stroke="#fff" stroke-width="1.2"/></svg>
<svg class="a" style="left:1735px;top:1049px;" width="20" height="22" viewBox="0 0 20 22"><path d="M3 18L14 4Q16 2 17.5 3.5Q19 5 17 7L7 18Q5 20 3 18Z" fill="none" stroke="#e8e8e8" stroke-width="1.1"/><path d="M5 14Q3 10 8 9" fill="none" stroke="#e8e8e8" stroke-width="1.1"/></svg>
<div class="t" style="left:1767px;top:1051.8px;height:17.6px;line-height:17.6px;font-size:11.6px;color:#f0f0f0;">ENG</div>
<div class="t" style="left:1808px;top:1042.8999999999999px;height:17.4px;line-height:17.4px;font-size:11.4px;color:#f0f0f0;">04:59 PM</div>
<div class="t" style="left:1803px;top:1059.8px;height:17.6px;line-height:17.6px;font-size:11.6px;color:#f0f0f0;">23-09-2021</div>
<svg class="a" style="left:1877px;top:1048px;" width="30" height="28" viewBox="0 0 30 28"><path d="M2 2H20V14H7L3 18V14H2Z" fill="none" stroke="#f0f0f0" stroke-width="1.2"/><path d="M5 6H17M5 9H17" stroke="#f0f0f0" stroke-width="1.2"/><circle cx="17" cy="19" r="7" fill="#1c1c1c" stroke="#f0f0f0" stroke-width="1.1"/></svg>
<div class="t" style="left:1890.5px;top:1059.1px;height:17px;line-height:17px;font-size:11px;color:#f0f0f0;">1</div>
</body></html>
